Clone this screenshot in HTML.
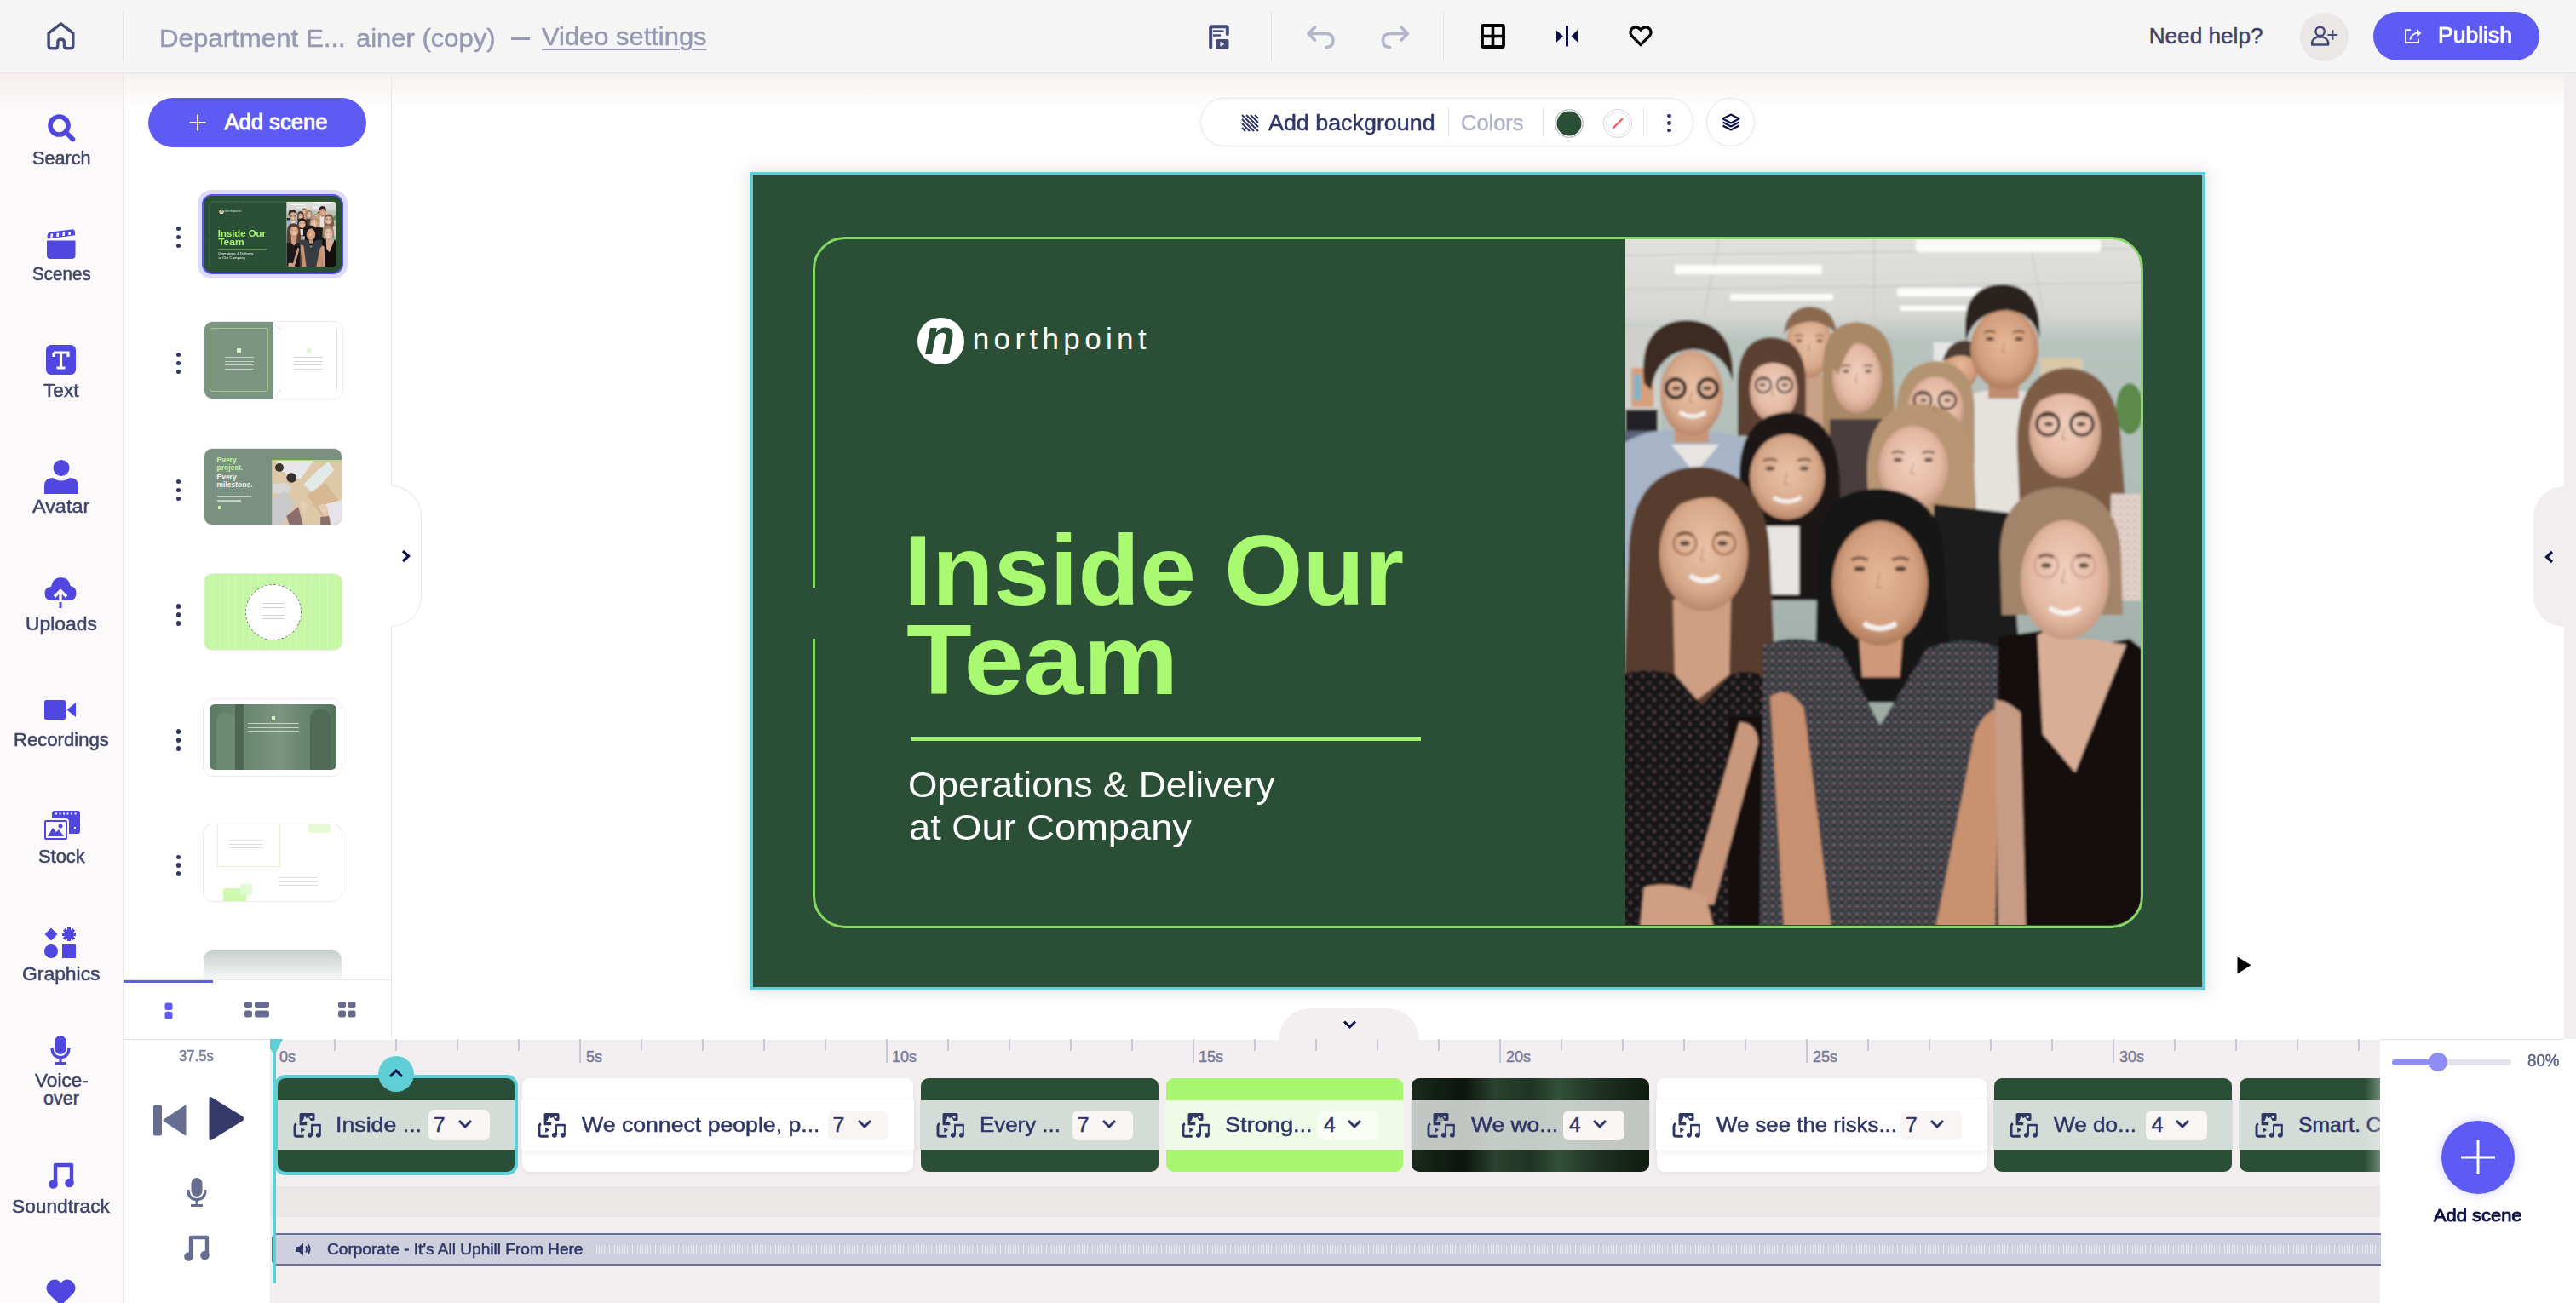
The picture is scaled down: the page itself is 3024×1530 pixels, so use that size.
<!DOCTYPE html><html><head><meta charset="utf-8"><style>
*{margin:0;padding:0;box-sizing:border-box}
html,body{width:3024px;height:1530px;overflow:hidden;background:#fff;font-family:"Liberation Sans",sans-serif}
.a{position:absolute}
.t{position:absolute;line-height:1;white-space:nowrap}
.m{-webkit-text-stroke:0.5px currentColor}
.sb{-webkit-text-stroke:0.9px currentColor}
svg{position:absolute;overflow:visible}
</style></head><body>
<div class="a" style="left:0;top:0;width:3024px;height:86px;background:#f5f5f5;border-bottom:1px solid #e6e2e2"></div>
<div class="a" style="left:0;top:86px;width:145px;height:1444px;background:#fcf9fa;border-right:1px solid #ebe7e8"></div>
<div class="a" style="left:145px;top:86px;width:315px;height:1134px;background:#fff;border-right:1px solid #ebe7e8"></div>
<div class="a" style="left:3010px;top:86px;width:14px;height:1134px;background:#f2eeef"></div>
<div class="a" style="left:0;top:86px;width:3010px;height:42px;background:linear-gradient(rgba(238,230,226,.55),rgba(255,255,255,0))"></div>
<div class="a" style="left:144px;top:14px;width:1px;height:58px;background:#e3e0e0"></div>
<div class="a" style="left:1492px;top:14px;width:1px;height:58px;background:#e3e0e0"></div>
<div class="a" style="left:1694px;top:14px;width:1px;height:58px;background:#e3e0e0"></div>
<svg style="left:55px;top:26px" width="34" height="34" viewBox="0 0 34 34"><path d="M2.1 12.8 L16.5 1.9 L30.8 12.8 V27.5 Q30.8 30.8 27.5 30.8 H23.7 Q20.4 30.8 20.4 27.5 V23.8 Q20.4 20 16.6 20 Q12.8 20 12.8 23.8 V27.5 Q12.8 30.8 9.5 30.8 H5.4 Q2.1 30.8 2.1 27.5 Z" fill="none" stroke="#464c78" stroke-width="3.4" stroke-linejoin="round"/></svg>
<div class="t m" style="left:187.3px;top:30.2px;font-size:29.65px;color:#9799b3;font-weight:400;letter-spacing:0.00px;transform:scaleX(1.0539);transform-origin:0 0;">Department E...</div>
<div class="t m" style="left:418.2px;top:30.2px;font-size:29.65px;color:#9799b3;font-weight:400;letter-spacing:0.00px;transform:scaleX(1.0451);transform-origin:0 0;">ainer (copy)</div>
<div class="a" style="left:600px;top:44px;width:22px;height:3px;background:#9799b3"></div>
<div class="t m" style="left:636.2px;top:28.0px;font-size:29.65px;color:#9799b3;font-weight:400;letter-spacing:0.00px;transform:scaleX(1.0425);transform-origin:0 0;text-decoration:underline;text-underline-offset:4px;text-decoration-thickness:2px">Video settings</div>
<svg style="left:1419px;top:29px" width="24" height="29" viewBox="0 0 24 29"><path d="M2.2 26.5 V4 Q2.2 2.2 4 2.2 H20 Q21.8 2.2 21.8 4 V11" fill="none" stroke="#464c78" stroke-width="4" stroke-linecap="round"/><rect x="5" y="6.3" width="12.5" height="2.4" fill="#464c78"/><rect x="5" y="11.3" width="9" height="2.4" fill="#464c78"/><rect x="8" y="17" width="15.5" height="11.5" rx="2" fill="#464c78"/><path d="M13.5 19.8 L18.5 22.8 L13.5 25.8Z" fill="#f4f4f4"/></svg>
<svg style="left:1534px;top:30px" width="34" height="28" viewBox="0 0 34 28"><path d="M9.5 2 L2 9.5 L9.5 17 M2 9.5 H22.5 Q31 9.5 31 17.5 Q31 25 23 25.5" fill="none" stroke="#b3b5cc" stroke-width="3.6" stroke-linecap="round" stroke-linejoin="round"/></svg>
<svg style="left:1620px;top:30px" width="35" height="28" viewBox="0 0 35 28"><path d="M25 2 L32.5 9.5 L25 17 M32.5 9.5 H12 Q3.5 9.5 3.5 17.5 Q3.5 25 11.5 25.5" fill="none" stroke="#b3b5cc" stroke-width="3.6" stroke-linecap="round" stroke-linejoin="round"/></svg>
<svg style="left:1738px;top:28px" width="29" height="29" viewBox="0 0 29 29"><rect x="2" y="2" width="25" height="25" rx="1.5" fill="none" stroke="#000" stroke-width="3.8"/><path d="M14.5 2 V27 M2 14.5 H27" stroke="#000" stroke-width="3.6"/></svg>
<svg style="left:1827px;top:30px" width="25" height="26" viewBox="0 0 25 26"><rect x="11" y="0.5" width="3" height="24" fill="#0b0f4a"/><path d="M0 5.5 L8 12.6 L0 19.8Z M25 5 L17.5 12.6 L25 19.5Z" fill="#0b0f4a"/></svg>
<svg style="left:1912px;top:30px" width="28" height="25" viewBox="0 0 28 25"><path d="M14 22.5 L3.8 12.3 Q0.8 9 2.5 5.3 Q4.5 1.8 8 1.8 Q11.3 1.8 14 5 Q16.7 1.8 20 1.8 Q23.5 1.8 25.5 5.3 Q27.2 9 24.2 12.3 Z" fill="none" stroke="#000" stroke-width="3.2" stroke-linejoin="miter"/></svg>
<div class="t m" style="left:2522.7px;top:29.1px;font-size:26.16px;color:#3f4468;font-weight:400;letter-spacing:0.00px;">Need help?</div>
<div class="a" style="left:2700px;top:14.5px;width:57px;height:57px;border-radius:50%;background:#ebe7e7"></div>
<svg style="left:2700px;top:20px" width="50" height="45" viewBox="2700 20 50 45"><circle cx="2723.6" cy="36.9" r="5.2" fill="none" stroke="#464c78" stroke-width="2.5"/><path d="M2714.2 52.6 V49.5 Q2714.5 46 2719.5 43.8 L2721 43.2 Q2723.6 44.5 2726.2 43.2 L2727.7 43.8 Q2732.7 46 2733 49.5 V52.6 Z" fill="none" stroke="#464c78" stroke-width="2.5" stroke-linejoin="round"/><path d="M2732.4 41 H2744.2 M2738.3 35.2 V46.8" stroke="#464c78" stroke-width="2.2"/></svg>
<div class="a" style="left:2786px;top:14px;width:195px;height:57px;border-radius:29px;background:#5d5bf3"></div>
<svg style="left:2815px;top:25px" width="35" height="35" viewBox="2815 25 35 35"><path d="M2830 35.1 H2823.9 V49.8 H2839 V45.5" fill="none" stroke="#fff" stroke-width="1.8"/><path d="M2829.5 46 Q2831 39.5 2838.5 38.3" fill="none" stroke="#fff" stroke-width="1.8" stroke-linecap="round"/><path d="M2836.8 34.3 L2842.6 38.6 L2837.6 43.3Z" fill="#fff"/></svg>
<div class="t sb" style="left:2862.4px;top:29.3px;font-size:25.87px;color:#fff;font-weight:400;letter-spacing:0.00px;transform:scaleX(1.0254);transform-origin:0 0;">Publish</div>
<svg style="left:55px;top:133px" width="34" height="34" viewBox="0 0 34 34"><circle cx="14.5" cy="14.5" r="10.5" fill="none" stroke="#4f47e0" stroke-width="5.6"/><path d="M22.5 22.5 L30.5 30.5" stroke="#4f47e0" stroke-width="5.6" stroke-linecap="round"/></svg>
<div class="t m" style="left:38.0px;top:175.7px;font-size:21.51px;color:#3f4468;font-weight:400;letter-spacing:0.00px;transform:scaleX(1.0050);transform-origin:0 0;">Search</div>
<svg style="left:54px;top:269px" width="35" height="35" viewBox="0 0 35 35"><path d="M1.5 8.5 Q1.5 4.2 5.5 3.6 L30 0.4 Q33.5 0 34 3.5 L34.2 7.2 L1.8 11.5 Z" fill="#4f47e0"/><path d="M5.6 5.6 h2.6 l-0.4 4.2 h-2.6z M12.6 4.7 h2.6 l-0.4 4.2 h-2.6z M19.6 3.8 h2.6 l-0.4 4.2 h-2.6z M26.6 2.9 h2.6 l-0.4 4.2 h-2.6z" fill="#fcf9fa"/><path d="M1 13.5 H34.5 V30.5 Q34.5 35 30 35 H5.5 Q1 35 1 30.5 Z" fill="#4f47e0"/></svg>
<div class="t m" style="left:38.0px;top:312.2px;font-size:21.51px;color:#3f4468;font-weight:400;letter-spacing:0.00px;transform:scaleX(0.9583);transform-origin:0 0;">Scenes</div>
<svg style="left:54px;top:405px" width="35" height="35" viewBox="0 0 35 35"><rect x="0" y="0" width="35" height="35" rx="6" fill="#4f47e0"/><path d="M9 9 H26 V14 M9 9 V14 M17.5 9 V27 M12.5 27 H22.5" fill="none" stroke="#fff" stroke-width="3.2"/></svg>
<div class="t m" style="left:51.0px;top:449.2px;font-size:21.51px;color:#3f4468;font-weight:400;letter-spacing:0.00px;transform:scaleX(1.0518);transform-origin:0 0;">Text</div>
<svg style="left:52px;top:540px" width="40" height="40" viewBox="0 0 40 40"><circle cx="20" cy="9.5" r="9.5" fill="#4f47e0"/><path d="M0 40 V31 Q0 21 10 21 Q15 24.5 20 24.5 Q25 24.5 30 21 Q40 21 40 31 V40 Z" fill="#4f47e0"/></svg>
<div class="t m" style="left:38.0px;top:585.2px;font-size:21.51px;color:#3f4468;font-weight:400;letter-spacing:0.00px;transform:scaleX(1.0878);transform-origin:0 0;">Avatar</div>
<svg style="left:52px;top:677px" width="38" height="37" viewBox="0 0 38 37"><path d="M9 28 Q0.5 28 0.5 20 Q0.5 12.5 8 12 Q10 1 19.5 1 Q29 1 30.5 11 Q37.5 12 37.5 19.5 Q37.5 28 29 28 Z" fill="#4f47e0"/><path d="M19 35 V17 M12 23.5 L19 16.5 L26 23.5" fill="none" stroke="#fcf9fa" stroke-width="3.4" stroke-linejoin="round"/><path d="M19 37 V30" stroke="#4f47e0" stroke-width="3"/></svg>
<div class="t m" style="left:29.9px;top:723.2px;font-size:21.51px;color:#3f4468;font-weight:400;letter-spacing:0.00px;transform:scaleX(1.0631);transform-origin:0 0;">Uploads</div>
<svg style="left:52px;top:822px" width="38" height="24" viewBox="0 0 38 24"><rect x="0" y="0" width="25" height="23" rx="2.5" fill="#4f47e0"/><path d="M26.5 11.5 L37 3 V20 Z" fill="#4f47e0"/></svg>
<div class="t m" style="left:16.0px;top:859.2px;font-size:21.51px;color:#3f4468;font-weight:400;letter-spacing:0.00px;transform:scaleX(1.0280);transform-origin:0 0;">Recordings</div>
<svg style="left:49px;top:951px" width="46" height="37" viewBox="0 0 46 37"><rect x="12" y="1" width="33" height="27" rx="3" fill="#4f47e0"/><path d="M16 4.5 H42 M38 21 H42" stroke="#fcf9fa" stroke-width="2" stroke-dasharray="2 2.5"/><rect x="2" y="11" width="29" height="25" rx="3" fill="#4f47e0" stroke="#fcf9fa" stroke-width="2"/><rect x="5" y="14" width="23" height="19" fill="#fcf9fa"/><path d="M7 31 L13 21 L17 26 L20 23 L26 31Z" fill="#4f47e0"/><circle cx="22" cy="19" r="2.5" fill="#4f47e0"/></svg>
<div class="t m" style="left:44.6px;top:996.2px;font-size:21.51px;color:#3f4468;font-weight:400;letter-spacing:0.00px;transform:scaleX(1.0163);transform-origin:0 0;">Stock</div>
<svg style="left:52px;top:1089px" width="38" height="36" viewBox="0 0 38 36"><path d="M8 0.5 L15.5 8 L8 15.5 L0.5 8Z" fill="#4f47e0"/><path d="M29 0 V16 M21 8 H37 M23.3 2.3 L34.7 13.7 M34.7 2.3 L23.3 13.7" stroke="#4f47e0" stroke-width="4"/><circle cx="8" cy="28" r="8" fill="#4f47e0"/><rect x="21" y="20" width="16" height="16" fill="#4f47e0"/></svg>
<div class="t m" style="left:25.9px;top:1133.7px;font-size:21.51px;color:#3f4468;font-weight:400;letter-spacing:0.00px;transform:scaleX(1.0643);transform-origin:0 0;">Graphics</div>
<svg style="left:59px;top:1216px" width="24" height="34" viewBox="0 0 24 34"><rect x="5.5" y="0" width="13" height="22" rx="6.5" fill="#4f47e0"/><path d="M2 14 Q2 25.5 12 25.5 Q22 25.5 22 14" fill="none" stroke="#4f47e0" stroke-width="3.2"/><path d="M12 25.5 V32 M5 32.5 H19" stroke="#4f47e0" stroke-width="3.2"/></svg>
<div class="t m" style="left:40.8px;top:1259.2px;font-size:21.51px;color:#3f4468;font-weight:400;letter-spacing:0.00px;transform:scaleX(1.0521);transform-origin:0 0;">Voice-</div>
<div class="t m" style="left:51.0px;top:1280.2px;font-size:21.51px;color:#3f4468;font-weight:400;letter-spacing:0.00px;">over</div>
<svg style="left:57px;top:1365px" width="30" height="31" viewBox="0 0 30 31"><path d="M8 25 V3 H27 V23" fill="none" stroke="#4f47e0" stroke-width="4.4" stroke-linejoin="round"/><circle cx="5.5" cy="25.5" r="5.3" fill="#4f47e0"/><circle cx="24.5" cy="24" r="5.3" fill="#4f47e0"/></svg>
<div class="t m" style="left:14.0px;top:1407.2px;font-size:21.51px;color:#3f4468;font-weight:400;letter-spacing:0.00px;transform:scaleX(1.0568);transform-origin:0 0;">Soundtrack</div>
<svg style="left:54px;top:1502px" width="35" height="32" viewBox="0 0 35 32"><path d="M17.5 31 L3 17 Q-1 12 1.5 6.5 Q4.5 0.5 10 0.5 Q14.5 0.5 17.5 4.5 Q20.5 0.5 25 0.5 Q30.5 0.5 33.5 6.5 Q36 12 32 17Z" fill="#4f47e0"/></svg>
<div class="a" style="left:174px;top:115px;width:256px;height:58px;border-radius:29px;background:#5d5bf3"></div>
<svg style="left:222px;top:134px" width="20" height="20" viewBox="0 0 20 20"><path d="M10 0.5 V19.5 M0.5 10 H19.5" stroke="#fff" stroke-width="2"/></svg>
<div class="t sb" style="left:263.5px;top:131.4px;font-size:25.58px;color:#fff;font-weight:400;letter-spacing:0.00px;">Add scene</div>
<div class="a" style="left:206.6px;top:265.9px;width:5.6px;height:5.6px;border-radius:50%;background:#2f3566"></div>
<div class="a" style="left:206.6px;top:275.7px;width:5.6px;height:5.6px;border-radius:50%;background:#2f3566"></div>
<div class="a" style="left:206.6px;top:285.5px;width:5.6px;height:5.6px;border-radius:50%;background:#2f3566"></div>
<div class="a" style="left:206.6px;top:413.9px;width:5.6px;height:5.6px;border-radius:50%;background:#2f3566"></div>
<div class="a" style="left:206.6px;top:423.7px;width:5.6px;height:5.6px;border-radius:50%;background:#2f3566"></div>
<div class="a" style="left:206.6px;top:433.5px;width:5.6px;height:5.6px;border-radius:50%;background:#2f3566"></div>
<div class="a" style="left:206.6px;top:562.9px;width:5.6px;height:5.6px;border-radius:50%;background:#2f3566"></div>
<div class="a" style="left:206.6px;top:572.7px;width:5.6px;height:5.6px;border-radius:50%;background:#2f3566"></div>
<div class="a" style="left:206.6px;top:582.5px;width:5.6px;height:5.6px;border-radius:50%;background:#2f3566"></div>
<div class="a" style="left:206.6px;top:709.4px;width:5.6px;height:5.6px;border-radius:50%;background:#2f3566"></div>
<div class="a" style="left:206.6px;top:719.2px;width:5.6px;height:5.6px;border-radius:50%;background:#2f3566"></div>
<div class="a" style="left:206.6px;top:729.0px;width:5.6px;height:5.6px;border-radius:50%;background:#2f3566"></div>
<div class="a" style="left:206.6px;top:856.4px;width:5.6px;height:5.6px;border-radius:50%;background:#2f3566"></div>
<div class="a" style="left:206.6px;top:866.2px;width:5.6px;height:5.6px;border-radius:50%;background:#2f3566"></div>
<div class="a" style="left:206.6px;top:876.0px;width:5.6px;height:5.6px;border-radius:50%;background:#2f3566"></div>
<div class="a" style="left:206.6px;top:1003.6px;width:5.6px;height:5.6px;border-radius:50%;background:#2f3566"></div>
<div class="a" style="left:206.6px;top:1013.4px;width:5.6px;height:5.6px;border-radius:50%;background:#2f3566"></div>
<div class="a" style="left:206.6px;top:1023.2px;width:5.6px;height:5.6px;border-radius:50%;background:#2f3566"></div>
<div class="a" style="left:232px;top:223px;width:176px;height:104px;border-radius:16px;background:#dddafd"></div>
<div class="a" style="left:237px;top:228px;width:166px;height:93.5px;border-radius:12px;background:#5a55ee"></div>
<div class="a" style="left:238.5px;top:377px;width:164px;height:92px;border-radius:10px;background:#fff;border:1px solid #eee9ea;overflow:hidden"><div class="a" style="left:0;top:0;width:81px;height:92px;background:#7c9482"></div><div class="a" style="left:6px;top:7px;width:69px;height:75px;border:1px solid #a9d394;border-radius:3px;opacity:.8"></div><div class="a" style="left:87px;top:7px;width:69px;height:75px;border-left:1px solid #9aa39c;border-right:1px solid #d9e3dc;border-radius:3px"></div><div class="a" style="left:38px;top:31px;width:5px;height:5px;background:#d5f6c0"></div><div class="a" style="left:120px;top:31px;width:5px;height:5px;background:#dff8cf"></div><div class="a" style="left:24px;top:41px;width:34px;height:18px;background:repeating-linear-gradient(#dfe6e0 0 1.2px,transparent 1.2px 4.5px);opacity:.75"></div><div class="a" style="left:105px;top:41px;width:34px;height:18px;background:repeating-linear-gradient(#c4c4c9 0 1.2px,transparent 1.2px 4.5px);opacity:.7"></div></div>
<div class="a" style="left:238.5px;top:526px;width:163px;height:91px;border-radius:10px;background:#7a9181;border:1px solid #eee9ea;overflow:hidden"><svg style="left:80.5px;top:12.5px" width="82" height="78" viewBox="319.8 539 82 78"><rect x="319" y="539" width="84" height="80" fill="#ddc9a8"/><rect x="319.8" y="539" width="82" height="1.2" fill="#9fe07f"/><path d="M324 540 L368 540 L352 562 L330 552Z" fill="#e8e6ea"/><path d="M373 551 L385 541 L392 551 L367 578 L356 568Z" fill="#e3e9e7"/><path d="M360 580 L382 566 L400 590 L378 606Z" fill="#d6b892"/><circle cx="327.8" cy="548" r="5" fill="#3b3330"/><circle cx="342" cy="560" r="5.8" fill="#35302d"/><path d="M319.8 567 L335 566 L342 572 L336 580 L319.8 578Z" fill="#d9d6d6"/><path d="M319.8 585 L334 575 L346 590 L330 617 L319.8 617Z" fill="#c9c9cb"/><path d="M336 605 L350 594 L356 617 L340 617Z" fill="#8c6f6d"/><path d="M376 606 L386 605 L388 617 L376 617Z" fill="#8c6f6d"/><path d="M382 591 L401 586 L401 617 L390 617Z" fill="#e6e4ea"/><path d="M352 590 Q356 585 362 592 L356 602 Z M373 593 Q380 588 385 596 L381 606Z" fill="#e8cdb5"/></svg><div class="t" style="left:15px;top:9px;font-size:8.5px;font-weight:700;color:#bdf59a;line-height:9px">Every<br>project.</div><div class="t" style="left:15px;top:29px;font-size:8.5px;font-weight:700;color:#f1f4f1;line-height:9px">Every<br>milestone.</div><div class="a" style="left:15px;top:55px;width:40px;height:1.5px;background:#c2cec6"></div><div class="a" style="left:15px;top:60px;width:28px;height:1.5px;background:#c2cec6"></div><div class="a" style="left:16px;top:67px;width:4px;height:4px;background:#c9f3ad"></div></div>
<div class="a" style="left:238.5px;top:672.5px;width:163px;height:91px;border-radius:10px;background:#c6f7a6 repeating-linear-gradient(90deg,rgba(255,255,255,.18) 0 1px,transparent 1px 9px);border:1px solid #eee9ea;overflow:hidden"><div class="a" style="left:48px;top:12px;width:66px;height:66px;border-radius:50%;background:#fff;border:1px dashed #6f7c70"></div><div class="a" style="left:68px;top:34px;width:26px;height:22px;background:repeating-linear-gradient(#cfd0d3 0 1px,transparent 1px 4.5px)"></div></div>
<div class="a" style="left:238px;top:819.5px;width:164px;height:92.5px;border-radius:12px;background:#fff;border:1px solid #eee9ea"></div>
<div class="a" style="left:246px;top:827px;width:148.5px;height:77px;border-radius:6px;background:linear-gradient(90deg,#5d7a63 0%,#6a8770 30%,#7a9480 55%,#688570 75%,#53705a 100%);overflow:hidden"><div class="a" style="left:30px;top:0;width:10px;height:77px;background:#4e6653"></div><div class="a" style="left:8px;top:10px;width:22px;height:67px;border-radius:10px 10px 0 0;background:#6c8a72"></div><div class="a" style="left:118px;top:6px;width:24px;height:71px;border-radius:11px 11px 0 0;background:#4f6b56"></div><div class="a" style="left:73px;top:14px;width:4px;height:4px;background:#d5f5bd"></div><div class="a" style="left:45px;top:22px;width:60px;height:14px;background:repeating-linear-gradient(rgba(230,236,231,.75) 0 1px,transparent 1px 4.5px)"></div></div>
<div class="a" style="left:238px;top:966.7px;width:164px;height:92.5px;border-radius:12px;background:#fff;border:1px solid #eee9ea;overflow:hidden"><div class="a" style="left:16px;top:0;width:74px;height:50px;border:1px solid #e2f3d8;border-top:0"></div><div class="a" style="left:123px;top:0;width:26px;height:10px;background:#e5fad5;border-radius:0 0 3px 3px"></div><div class="a" style="left:30px;top:18px;width:40px;height:12px;background:repeating-linear-gradient(#dcdce0 0 1px,transparent 1px 4.5px)"></div><div class="a" style="left:88px;top:62px;width:46px;height:12px;background:repeating-linear-gradient(#dcdce0 0 1px,transparent 1px 4.5px)"></div><div class="a" style="left:23px;top:75px;width:27px;height:18px;background:#cff8b0;border-radius:3px"></div><div class="a" style="left:43px;top:70px;width:14px;height:13px;background:#e3fbd3;border-radius:2px"></div></div>
<div class="a" style="left:239px;top:1115.6px;width:162px;height:35px;border-radius:10px 10px 0 0;background:linear-gradient(#c8cfcb,#f3f5f4 90%,#fff)"></div>
<div class="a" style="left:145px;top:1150px;width:314px;height:1px;background:#ebe7e8"></div>
<div class="a" style="left:145px;top:1151px;width:105px;height:3px;background:#5d5bf3"></div>
<svg style="left:193px;top:1177px" width="10" height="20" viewBox="0 0 10 20"><rect x="0.5" y="0.5" width="9" height="8.5" rx="2.5" fill="#5d5bf3"/><rect x="0.5" y="10.8" width="9" height="8.7" rx="2.5" fill="#5d5bf3"/></svg>
<svg style="left:287px;top:1176px" width="29" height="19" viewBox="0 0 29 19"><rect x="0" y="0" width="9" height="8" rx="2.5" fill="#676c91"/><rect x="12" y="0" width="17" height="8" rx="2.5" fill="#676c91"/><rect x="0" y="10.5" width="9" height="8" rx="2.5" fill="#676c91"/><rect x="12" y="10.5" width="17" height="8" rx="2.5" fill="#676c91"/></svg>
<svg style="left:397px;top:1176px" width="21" height="19" viewBox="0 0 21 19"><rect x="0" y="0" width="9" height="8" rx="2.5" fill="#676c91"/><rect x="11.5" y="0" width="9" height="8" rx="2.5" fill="#676c91"/><rect x="0" y="10.5" width="9" height="8" rx="2.5" fill="#676c91"/><rect x="11.5" y="10.5" width="9" height="8" rx="2.5" fill="#676c91"/></svg>
<div class="a" style="left:459px;top:570px;width:36px;height:166px;background:#fff;border:1px solid #ebe7e8;border-left:0;border-radius:0 36px 36px 0"></div>
<div class="a" style="left:458px;top:571px;width:2px;height:164px;background:#fff"></div>
<svg style="left:471px;top:645px" width="11" height="16" viewBox="0 0 11 16"><path d="M2 2 L8.5 8 L2 14" fill="none" stroke="#0b0f4a" stroke-width="3.2"/></svg>
<div class="a" style="left:1409px;top:115px;width:579px;height:57px;border-radius:29px;background:#fff;border:1px solid #e9e6e6;box-shadow:0 1px 6px rgba(120,100,90,.06)"></div>
<svg style="left:1457px;top:134px" width="21" height="21" viewBox="0 0 21 21"><path d="M1 1 L20 20 M1 6 L15 20 M1 11 L10 20 M1 16 L5 20 M6 1 L20 15 M11 1 L20 10 M16 1 L20 5" stroke="#2f3566" stroke-width="2"/></svg>
<div class="t m" style="left:1489.0px;top:131.1px;font-size:26.16px;color:#2f3566;font-weight:400;letter-spacing:0.00px;transform:scaleX(1.0267);transform-origin:0 0;">Add background</div>
<div class="a" style="left:1700px;top:126px;width:1px;height:35px;background:#e6e3e3"></div>
<div class="t m" style="left:1714.5px;top:131.1px;font-size:26.16px;color:#b1b3c9;font-weight:400;letter-spacing:0.00px;transform:scaleX(0.9731);transform-origin:0 0;">Colors</div>
<div class="a" style="left:1811px;top:126px;width:1px;height:35px;background:#e6e3e3"></div>
<div class="a" style="left:1824.5px;top:127.5px;width:34px;height:34px;border-radius:50%;background:#2a4f36;border:1px solid #c9c9d6;box-shadow:inset 0 0 0 1.5px #fff"></div>
<div class="a" style="left:1882px;top:127.5px;width:34px;height:34px;border-radius:50%;background:#fff;border:1px solid #d6d6e0;box-shadow:inset 0 0 0 2px #fff,inset 0 0 0 3px #e4e4ec"></div>
<svg style="left:1891px;top:137px" width="16" height="16" viewBox="0 0 16 16"><path d="M2 14 L14 2" stroke="#f0524f" stroke-width="2"/></svg>
<div class="a" style="left:1929px;top:126px;width:1px;height:35px;background:#e6e3e3"></div>
<div class="a" style="left:1957px;top:133.5px;width:4.8px;height:4.8px;border-radius:50%;background:#2f3566"></div>
<div class="a" style="left:1957px;top:142.1px;width:4.8px;height:4.8px;border-radius:50%;background:#2f3566"></div>
<div class="a" style="left:1957px;top:150.7px;width:4.8px;height:4.8px;border-radius:50%;background:#2f3566"></div>
<div class="a" style="left:2003px;top:115px;width:57px;height:57px;border-radius:50%;background:#fff;border:1px solid #e9e6e6;box-shadow:0 1px 6px rgba(120,100,90,.06)"></div>
<svg style="left:2021px;top:133px" width="22" height="22" viewBox="0 0 22 22"><path d="M11 1.5 L20.5 6.5 L11 11.5 L1.5 6.5Z" fill="none" stroke="#0b0f4a" stroke-width="2" stroke-linejoin="round"/><path d="M1.5 10.5 L11 15.5 L20.5 10.5 M1.5 14.5 L11 19.5 L20.5 14.5" fill="none" stroke="#0b0f4a" stroke-width="2" stroke-linejoin="round"/></svg>
<div class="a" style="left:880px;top:202px;width:1709px;height:961px;background:#5fcfd5;box-shadow:0 0 18px 3px rgba(130,100,85,.17)"></div>
<div class="a" style="left:884px;top:206px;width:1701px;height:953px;background:#2a4f36"></div>
<div class="a" style="left:954px;top:277.5px;width:1562px;height:812.0px;border:3.5px solid #86d763;border-radius:38px"></div>
<div class="a" style="left:950px;top:690px;width:12px;height:60px;background:#2a4f36"></div>
<div class="a" id="photo" style="left:1908px;top:281px;width:604.5px;height:805px;border-radius:0 34px 34px 0;overflow:hidden;background:#b9b6b4"><svg style="left:0;top:0" width="604.5" height="805" viewBox="1908 281 604.5 805" preserveAspectRatio="none"><defs><filter id="bl" x="-5%" y="-5%" width="110%" height="110%"><feGaussianBlur stdDeviation="1.8"/></filter><pattern id="fl" width="9" height="9" patternUnits="userSpaceOnUse"><rect width="9" height="9" fill="#2c373d"/><circle cx="2" cy="2" r="1.3" fill="#b8858a"/><circle cx="6.5" cy="6" r="1.1" fill="#9c7b80"/><circle cx="7" cy="1.5" r="0.6" fill="#cbb9b7"/></pattern><pattern id="fl2" width="14" height="14" patternUnits="userSpaceOnUse"><rect width="14" height="14" fill="#161414"/><ellipse cx="4" cy="4" rx="2.6" ry="1.4" fill="#4e4148"/><circle cx="10" cy="10" r="1.4" fill="#7d5c63"/></pattern><pattern id="fl3" width="8" height="8" patternUnits="userSpaceOnUse"><rect width="8" height="8" fill="#e2d3cb"/><circle cx="2" cy="3" r="1.2" fill="#c98d8f"/><circle cx="6" cy="6" r="1" fill="#b7a39a"/></pattern><radialGradient id="sk" cx="50%" cy="45%" r="55%"><stop offset="0" stop-color="#e9c1a6"/><stop offset=".7" stop-color="#d8a98b"/><stop offset="1" stop-color="#b98669"/></radialGradient><radialGradient id="sk2" cx="50%" cy="45%" r="55%"><stop offset="0" stop-color="#e6b796"/><stop offset=".7" stop-color="#d39f7e"/><stop offset="1" stop-color="#ad7a5b"/></radialGradient><radialGradient id="sk3" cx="50%" cy="45%" r="55%"><stop offset="0" stop-color="#f0d0bf"/><stop offset=".7" stop-color="#e3b9a3"/><stop offset="1" stop-color="#c69882"/></radialGradient><linearGradient id="wall" x1="0" y1="0" x2="0" y2="1"><stop offset="0" stop-color="#e3e2df"/><stop offset=".12" stop-color="#d6d6d3"/><stop offset=".16" stop-color="#b8c3be"/><stop offset=".4" stop-color="#aebbb6"/><stop offset="1" stop-color="#8f9a95"/></linearGradient></defs><g filter="url(#bl)"><rect x="1900" y="270" width="620" height="820" fill="url(#wall)"/><path d="M1900 300 L2520 292 M1900 340 L2520 332 M2020 270 L2000 372 M2200 270 L2200 372 M2380 270 L2400 372" stroke="#c9c8c5" stroke-width="1.5"/><rect x="1966" y="311" width="173" height="11" rx="3" fill="#fbfbfa"/><rect x="2031" y="345" width="121" height="8" rx="3" fill="#fbfbfa"/><rect x="2249" y="281" width="217" height="15" rx="3" fill="#fbfbfa"/><rect x="2227" y="338" width="102" height="10" rx="3" fill="#fbfbfa"/><rect x="2230" y="359" width="79" height="6" rx="3" fill="#fbfbfa"/><rect x="1905" y="384" width="44" height="140" fill="#cfcfcb"/><rect x="1915" y="432" width="26" height="46" fill="#d69f7c"/><rect x="1918" y="440" width="8" height="30" fill="#7fb5c8"/><rect x="1908" y="481" width="38" height="26" fill="#222326"/><rect x="1905" y="506" width="42" height="14" fill="#5b6476"/><rect x="2270" y="402" width="40" height="30" fill="#e4e6e6"/><rect x="2395" y="420" width="50" height="25" fill="#d9c8a8"/><ellipse cx="2500" cy="480" rx="16" ry="30" fill="#5d8a4c"/><ellipse cx="2302" cy="432" rx="20" ry="26" fill="url(#sk2)"/><path d="M2280 424 Q2288 398 2310 400 Q2330 408 2326 430 Q2310 412 2290 420Z" fill="#4b3a30"/><rect x="2104" y="440" width="44" height="70" fill="#c9a088"/><ellipse cx="2124" cy="406" rx="27" ry="38" fill="url(#sk)"/><path d="M2094 392 Q2098 360 2126 360 Q2154 362 2156 392 Q2140 376 2122 378 Q2104 380 2094 392Z" fill="#8a6a50"/><path d="M2140 425 Q2142 380 2180 378 Q2222 382 2222 432 L2226 525 L2140 525Z" fill="#a98865"/><ellipse cx="2180" cy="444" rx="29" ry="41" fill="url(#sk3)"/><path d="M2150 430 Q2160 392 2190 396 Q2170 400 2158 440Z" fill="#a98865"/><rect x="2148" y="492" width="70" height="95" fill="#4a3e3c"/><path d="M2294 470 Q2330 455 2352 458 Q2378 456 2406 470 L2410 625 L2290 625Z" fill="#e5e1dd"/><rect x="2334" y="440" width="36" height="28" fill="#c08d70"/><ellipse cx="2353" cy="410" rx="40" ry="47" fill="url(#sk2)"/><path d="M2308 400 Q2300 334 2352 334 Q2398 336 2394 398 Q2388 368 2356 364 Q2318 366 2308 400Z" fill="#2b211c"/><path d="M2226 482 Q2228 426 2274 424 Q2318 428 2318 482 L2318 545 L2226 545Z" fill="#b39371"/><ellipse cx="2272" cy="480" rx="33" ry="38" fill="url(#sk3)"/><circle cx="2257" cy="470" r="10" fill="none" stroke="#3d302b" stroke-width="2.6"/><circle cx="2286" cy="470" r="10" fill="none" stroke="#3d302b" stroke-width="2.6"/><path d="M2040 452 Q2040 396 2080 396 Q2120 398 2120 452 L2120 512 L2040 512Z" fill="#5b4132"/><ellipse cx="2082" cy="458" rx="28" ry="38" fill="url(#sk3)"/><path d="M2054 440 Q2080 412 2112 440 L2112 425 Q2080 398 2052 425Z" fill="#5b4132"/><circle cx="2070" cy="452" r="9" fill="none" stroke="#3a3838" stroke-width="2.2"/><circle cx="2095" cy="452" r="9" fill="none" stroke="#3a3838" stroke-width="2.2"/><path d="M2368 525 Q2366 434 2428 432 Q2488 436 2490 525 L2498 625 L2372 625Z" fill="#7b5c45"/><ellipse cx="2424" cy="508" rx="42" ry="53" fill="url(#sk3)"/><path d="M2384 478 Q2424 446 2468 480 L2470 458 Q2430 432 2380 460Z" fill="#7b5c45"/><circle cx="2404" cy="498" r="13" fill="none" stroke="#3b2d28" stroke-width="3.4"/><circle cx="2444" cy="498" r="13" fill="none" stroke="#3b2d28" stroke-width="3.4"/><rect x="2478" y="580" width="40" height="125" fill="url(#fl3)"/><path d="M1900 525 Q1930 500 1990 505 Q2040 508 2064 525 L2070 665 L1900 665Z" fill="#a7b4c6"/><path d="M1962 522 L1990 556 L2018 522Z" fill="#e7e5e2"/><rect x="1966" y="495" width="40" height="25" fill="#c89578"/><ellipse cx="1986" cy="462" rx="37" ry="50" fill="url(#sk)"/><path d="M1930 450 Q1922 378 1980 376 Q2038 378 2034 448 Q2024 412 1988 410 Q1946 412 1938 458Z" fill="#3e2b20"/><circle cx="1967" cy="456" r="11" fill="none" stroke="#1d1b1b" stroke-width="4"/><circle cx="2005" cy="456" r="11" fill="none" stroke="#1d1b1b" stroke-width="4"/><path d="M1972 484 Q1987 494 2002 484" fill="none" stroke="#f4f2f0" stroke-width="5"/><path d="M2192 562 Q2188 476 2256 474 Q2318 478 2318 562 L2324 672 L2196 672Z" fill="#b89573"/><ellipse cx="2246" cy="549" rx="41" ry="49" fill="url(#sk3)"/><path d="M2270 592 L2358 602 L2372 785 L2270 785Z" fill="#1c1a1a"/><path d="M2042 565 Q2040 486 2100 484 Q2160 488 2160 572 L2166 705 L2046 705Z" fill="#1c1816"/><ellipse cx="2098" cy="560" rx="44" ry="50" fill="url(#sk)"/><path d="M2056 545 Q2070 500 2110 500 Q2150 505 2150 545 L2150 515 Q2120 486 2090 488 Q2058 495 2056 545Z" fill="#1c1816"/><path d="M2082 584 Q2098 594 2114 584" fill="none" stroke="#f4f2f0" stroke-width="5"/><rect x="2064" y="618" width="48" height="80" fill="#e7e5e2"/><path d="M1912 655 Q1912 550 1995 548 Q2075 552 2078 655 L2086 845 L1905 845Z" fill="#583d2e"/><path d="M1964 704 L2032 704 L2030 792 L1992 822 L1966 792Z" fill="#cf9f83"/><ellipse cx="2000" cy="650" rx="52" ry="68" fill="url(#sk)"/><path d="M1950 622 Q1960 562 2002 562 Q2046 566 2052 620 L2042 590 Q2000 575 1960 598Z" fill="#583d2e"/><circle cx="1978" cy="638" r="13" fill="none" stroke="#b07b58" stroke-width="3.2"/><circle cx="2024" cy="638" r="13" fill="none" stroke="#b07b58" stroke-width="3.2"/><path d="M1984 676 Q2001 688 2018 676" fill="none" stroke="#f6f3f0" stroke-width="6"/><path d="M1905 792 Q1930 782 1966 792 L1998 828 L2032 792 Q2060 782 2080 802 L2082 1090 L1905 1090Z" fill="url(#fl2)"/><rect x="2030" y="842" width="50" height="250" fill="#121010"/><path d="M2042 848 Q2062 848 2064 872 L2012 1062 L1980 1062 Z" fill="#c8977c"/><path d="M1930 1042 Q1960 1032 2002 1052 L2012 1090 L1925 1090Z" fill="#cf9f83"/><path d="M2134 645 Q2134 574 2206 574 Q2280 578 2282 655 L2292 825 L2130 825Z" fill="#191614"/><path d="M2182 745 L2234 745 L2230 795 L2186 795Z" fill="#cf9979"/><ellipse cx="2207" cy="685" rx="56" ry="73" fill="url(#sk2)"/><path d="M2150 655 Q2160 598 2210 598 Q2262 600 2266 655 L2258 622 Q2210 594 2158 624Z" fill="#191614"/><path d="M2188 732 Q2207 744 2226 732" fill="none" stroke="#f6f3f0" stroke-width="6"/><path d="M2070 758 Q2110 740 2160 762 L2207 852 L2262 762 Q2310 742 2354 764 L2367 1090 L2066 1090Z" fill="url(#fl)"/><path d="M2078 818 Q2100 803 2118 833 L2150 1090 L2094 1090Z" fill="#c79070"/><path d="M2348 832 Q2330 832 2318 862 L2272 1090 L2342 1090Z" fill="#c8916f"/><path d="M2348 655 Q2346 574 2418 572 Q2488 576 2490 655 L2492 722 L2350 722Z" fill="#a2846b"/><path d="M2346 748 L2400 740 L2440 762 L2500 750 L2515 762 L2515 1090 L2345 1090Z" fill="#121010"/><path d="M2392 746 L2402 740 Q2420 754 2450 750 L2496 757 L2436 907 L2398 862Z" fill="#d9ae97"/><ellipse cx="2424" cy="681" rx="52" ry="70" fill="url(#sk3)"/><path d="M2376 645 Q2390 606 2424 606 Q2462 608 2470 645 L2466 620 Q2424 592 2380 622Z" fill="#a2846b"/><circle cx="2402" cy="664" r="14" fill="none" stroke="#d5a597" stroke-width="3"/><circle cx="2446" cy="664" r="14" fill="none" stroke="#d5a597" stroke-width="3"/><path d="M2406 714 Q2424 726 2442 714" fill="none" stroke="#f6f3f0" stroke-width="6"/><path d="M2342 822 Q2356 822 2372 837 L2378 1090 L2346 1090Z" fill="#c79c86"/><ellipse cx="1968.0" cy="456" rx="5.0" ry="2.3" fill="#3a2a24" opacity=".8"/><path d="M1960.8 448.1 Q1968.0 444.5 1975.2 448.1" fill="none" stroke="#4a3328" stroke-width="2.5" opacity=".7"/><ellipse cx="2004.0" cy="456" rx="5.0" ry="2.3" fill="#3a2a24" opacity=".8"/><path d="M1996.8 448.1 Q2004.0 444.5 2011.2 448.1" fill="none" stroke="#4a3328" stroke-width="2.5" opacity=".7"/><path d="M1986.0 459.6 L1983.1 472.2 L1988.2 472.9" fill="none" stroke="#b0795d" stroke-width="1.6" opacity=".6"/><ellipse cx="2069.0" cy="452" rx="3.6" ry="1.7" fill="#3a2a24" opacity=".8"/><path d="M2063.8 446.3 Q2069.0 443.7 2074.2 446.3" fill="none" stroke="#4a3328" stroke-width="1.8" opacity=".7"/><ellipse cx="2095.0" cy="452" rx="3.6" ry="1.7" fill="#3a2a24" opacity=".8"/><path d="M2089.8 446.3 Q2095.0 443.7 2100.2 446.3" fill="none" stroke="#4a3328" stroke-width="1.8" opacity=".7"/><path d="M2082.0 454.6 L2079.9 463.7 L2083.6 464.2" fill="none" stroke="#b0795d" stroke-width="1.6" opacity=".6"/><ellipse cx="2112.0" cy="400" rx="3.4" ry="1.6" fill="#3a2a24" opacity=".8"/><path d="M2107.2 394.7 Q2112.0 392.3 2116.8 394.7" fill="none" stroke="#4a3328" stroke-width="1.7" opacity=".7"/><ellipse cx="2136.0" cy="400" rx="3.4" ry="1.6" fill="#3a2a24" opacity=".8"/><path d="M2131.2 394.7 Q2136.0 392.3 2140.8 394.7" fill="none" stroke="#4a3328" stroke-width="1.7" opacity=".7"/><path d="M2124.0 402.4 L2122.1 410.8 L2125.4 411.3" fill="none" stroke="#b0795d" stroke-width="1.6" opacity=".6"/><ellipse cx="2167.0" cy="436" rx="3.6" ry="1.7" fill="#3a2a24" opacity=".8"/><path d="M2161.8 430.3 Q2167.0 427.7 2172.2 430.3" fill="none" stroke="#4a3328" stroke-width="1.8" opacity=".7"/><ellipse cx="2193.0" cy="436" rx="3.6" ry="1.7" fill="#3a2a24" opacity=".8"/><path d="M2187.8 430.3 Q2193.0 427.7 2198.2 430.3" fill="none" stroke="#4a3328" stroke-width="1.8" opacity=".7"/><path d="M2180.0 438.6 L2177.9 447.7 L2181.6 448.2" fill="none" stroke="#b0795d" stroke-width="1.6" opacity=".6"/><ellipse cx="2258.0" cy="470" rx="3.9" ry="1.8" fill="#3a2a24" opacity=".8"/><path d="M2252.4 463.8 Q2258.0 461.0 2263.6 463.8" fill="none" stroke="#4a3328" stroke-width="2.0" opacity=".7"/><ellipse cx="2286.0" cy="470" rx="3.9" ry="1.8" fill="#3a2a24" opacity=".8"/><path d="M2280.4 463.8 Q2286.0 461.0 2291.6 463.8" fill="none" stroke="#4a3328" stroke-width="2.0" opacity=".7"/><path d="M2272.0 472.8 L2269.8 482.6 L2273.7 483.2" fill="none" stroke="#b0795d" stroke-width="1.6" opacity=".6"/><ellipse cx="2336.0" cy="398" rx="4.8" ry="2.2" fill="#3a2a24" opacity=".8"/><path d="M2329.2 390.5 Q2336.0 387.1 2342.8 390.5" fill="none" stroke="#4a3328" stroke-width="2.4" opacity=".7"/><ellipse cx="2370.0" cy="398" rx="4.8" ry="2.2" fill="#3a2a24" opacity=".8"/><path d="M2363.2 390.5 Q2370.0 387.1 2376.8 390.5" fill="none" stroke="#4a3328" stroke-width="2.4" opacity=".7"/><path d="M2353.0 401.4 L2350.3 413.3 L2355.0 414.0" fill="none" stroke="#b0795d" stroke-width="1.6" opacity=".6"/><ellipse cx="2405.0" cy="498" rx="5.3" ry="2.5" fill="#3a2a24" opacity=".8"/><path d="M2397.4 489.6 Q2405.0 485.8 2412.6 489.6" fill="none" stroke="#4a3328" stroke-width="2.7" opacity=".7"/><ellipse cx="2443.0" cy="498" rx="5.3" ry="2.5" fill="#3a2a24" opacity=".8"/><path d="M2435.4 489.6 Q2443.0 485.8 2450.6 489.6" fill="none" stroke="#4a3328" stroke-width="2.7" opacity=".7"/><path d="M2424.0 501.8 L2421.0 515.1 L2426.3 515.9" fill="none" stroke="#b0795d" stroke-width="1.6" opacity=".6"/><ellipse cx="2228.0" cy="540" rx="5.0" ry="2.3" fill="#3a2a24" opacity=".8"/><path d="M2220.8 532.1 Q2228.0 528.5 2235.2 532.1" fill="none" stroke="#4a3328" stroke-width="2.5" opacity=".7"/><ellipse cx="2264.0" cy="540" rx="5.0" ry="2.3" fill="#3a2a24" opacity=".8"/><path d="M2256.8 532.1 Q2264.0 528.5 2271.2 532.1" fill="none" stroke="#4a3328" stroke-width="2.5" opacity=".7"/><path d="M2246.0 543.6 L2243.1 556.2 L2248.2 556.9" fill="none" stroke="#b0795d" stroke-width="1.6" opacity=".6"/><ellipse cx="2078.0" cy="550" rx="5.6" ry="2.6" fill="#3a2a24" opacity=".8"/><path d="M2070.0 541.2 Q2078.0 537.2 2086.0 541.2" fill="none" stroke="#4a3328" stroke-width="2.8" opacity=".7"/><ellipse cx="2118.0" cy="550" rx="5.6" ry="2.6" fill="#3a2a24" opacity=".8"/><path d="M2110.0 541.2 Q2118.0 537.2 2126.0 541.2" fill="none" stroke="#4a3328" stroke-width="2.8" opacity=".7"/><path d="M2098.0 554.0 L2094.8 568.0 L2100.4 568.8" fill="none" stroke="#b0795d" stroke-width="1.6" opacity=".6"/><ellipse cx="1978.0" cy="638" rx="6.2" ry="2.9" fill="#3a2a24" opacity=".8"/><path d="M1969.2 628.3 Q1978.0 623.9 1986.8 628.3" fill="none" stroke="#4a3328" stroke-width="3.1" opacity=".7"/><ellipse cx="2022.0" cy="638" rx="6.2" ry="2.9" fill="#3a2a24" opacity=".8"/><path d="M2013.2 628.3 Q2022.0 623.9 2030.8 628.3" fill="none" stroke="#4a3328" stroke-width="3.1" opacity=".7"/><path d="M2000.0 642.4 L1996.5 657.8 L2002.6 658.7" fill="none" stroke="#b0795d" stroke-width="1.6" opacity=".6"/><ellipse cx="2183.0" cy="668" rx="6.7" ry="3.1" fill="#3a2a24" opacity=".8"/><path d="M2173.4 657.4 Q2183.0 652.6 2192.6 657.4" fill="none" stroke="#4a3328" stroke-width="3.4" opacity=".7"/><ellipse cx="2231.0" cy="668" rx="6.7" ry="3.1" fill="#3a2a24" opacity=".8"/><path d="M2221.4 657.4 Q2231.0 652.6 2240.6 657.4" fill="none" stroke="#4a3328" stroke-width="3.4" opacity=".7"/><path d="M2207.0 672.8 L2203.2 689.6 L2209.9 690.6" fill="none" stroke="#b0795d" stroke-width="1.6" opacity=".6"/><ellipse cx="2402.0" cy="664" rx="6.2" ry="2.9" fill="#3a2a24" opacity=".8"/><path d="M2393.2 654.3 Q2402.0 649.9 2410.8 654.3" fill="none" stroke="#4a3328" stroke-width="3.1" opacity=".7"/><ellipse cx="2446.0" cy="664" rx="6.2" ry="2.9" fill="#3a2a24" opacity=".8"/><path d="M2437.2 654.3 Q2446.0 649.9 2454.8 654.3" fill="none" stroke="#4a3328" stroke-width="3.1" opacity=".7"/><path d="M2424.0 668.4 L2420.5 683.8 L2426.6 684.7" fill="none" stroke="#b0795d" stroke-width="1.6" opacity=".6"/></g></svg></div>
<div class="a" style="left:1076.8px;top:372.5px;width:55px;height:55.5px;border-radius:50%;background:#fff"></div>
<div class="t" style="left:1085px;top:365.5px;font-size:59px;font-weight:700;font-style:italic;color:#2a4f36;line-height:60px">n</div>
<div class="t " style="left:1141.8px;top:379.5px;font-size:35.00px;color:#fff;font-weight:400;letter-spacing:5.35px;">northpoint</div>
<div class="t " style="left:1061.0px;top:611.6px;font-size:115.99px;color:#a9f971;font-weight:700;letter-spacing:0.00px;transform:scaleX(1.0238);transform-origin:0 0;">Inside Our</div>
<div class="t " style="left:1063.5px;top:716.8px;font-size:116.28px;color:#a9f971;font-weight:700;letter-spacing:0.00px;transform:scaleX(1.0823);transform-origin:0 0;">Team</div>
<div class="a" style="left:1069px;top:865px;width:598.7px;height:4.5px;background:#a0ec6c"></div>
<div class="t " style="left:1066.1px;top:899.6px;font-size:42.88px;color:#fff;font-weight:400;letter-spacing:0.00px;transform:scaleX(1.0326);transform-origin:0 0;">Operations &amp; Delivery</div>
<div class="t " style="left:1067.1px;top:950.3px;font-size:42.88px;color:#fff;font-weight:400;letter-spacing:0.00px;transform:scaleX(1.0554);transform-origin:0 0;">at Our Company</div>
<div class="a" style="left:239px;top:230px;width:162px;height:89.5px;border-radius:10px;overflow:hidden;background:#2a4f36"><div style="position:absolute;left:0;top:0;width:3024px;height:1530px;transform:scale(0.09524,0.0945) translate(-884px,-206px);transform-origin:0 0"><div class="a" style="left:884px;top:206px;width:1701px;height:953px;background:#2a4f36"></div><div class="a" style="left:954px;top:277.5px;width:1562px;height:812.0px;border:3.5px solid #86d763;border-radius:38px"></div><div class="a" style="left:950px;top:690px;width:12px;height:60px;background:#2a4f36"></div><div class="a" id="photo" style="left:1908px;top:281px;width:604.5px;height:805px;border-radius:0 34px 34px 0;overflow:hidden;background:#b9b6b4"><svg style="left:0;top:0" width="604.5" height="805" viewBox="1908 281 604.5 805" preserveAspectRatio="none"><defs><filter id="bl" x="-5%" y="-5%" width="110%" height="110%"><feGaussianBlur stdDeviation="1.8"/></filter><pattern id="fl" width="9" height="9" patternUnits="userSpaceOnUse"><rect width="9" height="9" fill="#2c373d"/><circle cx="2" cy="2" r="1.3" fill="#b8858a"/><circle cx="6.5" cy="6" r="1.1" fill="#9c7b80"/><circle cx="7" cy="1.5" r="0.6" fill="#cbb9b7"/></pattern><pattern id="fl2" width="14" height="14" patternUnits="userSpaceOnUse"><rect width="14" height="14" fill="#161414"/><ellipse cx="4" cy="4" rx="2.6" ry="1.4" fill="#4e4148"/><circle cx="10" cy="10" r="1.4" fill="#7d5c63"/></pattern><pattern id="fl3" width="8" height="8" patternUnits="userSpaceOnUse"><rect width="8" height="8" fill="#e2d3cb"/><circle cx="2" cy="3" r="1.2" fill="#c98d8f"/><circle cx="6" cy="6" r="1" fill="#b7a39a"/></pattern><radialGradient id="sk" cx="50%" cy="45%" r="55%"><stop offset="0" stop-color="#e9c1a6"/><stop offset=".7" stop-color="#d8a98b"/><stop offset="1" stop-color="#b98669"/></radialGradient><radialGradient id="sk2" cx="50%" cy="45%" r="55%"><stop offset="0" stop-color="#e6b796"/><stop offset=".7" stop-color="#d39f7e"/><stop offset="1" stop-color="#ad7a5b"/></radialGradient><radialGradient id="sk3" cx="50%" cy="45%" r="55%"><stop offset="0" stop-color="#f0d0bf"/><stop offset=".7" stop-color="#e3b9a3"/><stop offset="1" stop-color="#c69882"/></radialGradient><linearGradient id="wall" x1="0" y1="0" x2="0" y2="1"><stop offset="0" stop-color="#e3e2df"/><stop offset=".12" stop-color="#d6d6d3"/><stop offset=".16" stop-color="#b8c3be"/><stop offset=".4" stop-color="#aebbb6"/><stop offset="1" stop-color="#8f9a95"/></linearGradient></defs><g filter="url(#bl)"><rect x="1900" y="270" width="620" height="820" fill="url(#wall)"/><path d="M1900 300 L2520 292 M1900 340 L2520 332 M2020 270 L2000 372 M2200 270 L2200 372 M2380 270 L2400 372" stroke="#c9c8c5" stroke-width="1.5"/><rect x="1966" y="311" width="173" height="11" rx="3" fill="#fbfbfa"/><rect x="2031" y="345" width="121" height="8" rx="3" fill="#fbfbfa"/><rect x="2249" y="281" width="217" height="15" rx="3" fill="#fbfbfa"/><rect x="2227" y="338" width="102" height="10" rx="3" fill="#fbfbfa"/><rect x="2230" y="359" width="79" height="6" rx="3" fill="#fbfbfa"/><rect x="1905" y="384" width="44" height="140" fill="#cfcfcb"/><rect x="1915" y="432" width="26" height="46" fill="#d69f7c"/><rect x="1918" y="440" width="8" height="30" fill="#7fb5c8"/><rect x="1908" y="481" width="38" height="26" fill="#222326"/><rect x="1905" y="506" width="42" height="14" fill="#5b6476"/><rect x="2270" y="402" width="40" height="30" fill="#e4e6e6"/><rect x="2395" y="420" width="50" height="25" fill="#d9c8a8"/><ellipse cx="2500" cy="480" rx="16" ry="30" fill="#5d8a4c"/><ellipse cx="2302" cy="432" rx="20" ry="26" fill="url(#sk2)"/><path d="M2280 424 Q2288 398 2310 400 Q2330 408 2326 430 Q2310 412 2290 420Z" fill="#4b3a30"/><rect x="2104" y="440" width="44" height="70" fill="#c9a088"/><ellipse cx="2124" cy="406" rx="27" ry="38" fill="url(#sk)"/><path d="M2094 392 Q2098 360 2126 360 Q2154 362 2156 392 Q2140 376 2122 378 Q2104 380 2094 392Z" fill="#8a6a50"/><path d="M2140 425 Q2142 380 2180 378 Q2222 382 2222 432 L2226 525 L2140 525Z" fill="#a98865"/><ellipse cx="2180" cy="444" rx="29" ry="41" fill="url(#sk3)"/><path d="M2150 430 Q2160 392 2190 396 Q2170 400 2158 440Z" fill="#a98865"/><rect x="2148" y="492" width="70" height="95" fill="#4a3e3c"/><path d="M2294 470 Q2330 455 2352 458 Q2378 456 2406 470 L2410 625 L2290 625Z" fill="#e5e1dd"/><rect x="2334" y="440" width="36" height="28" fill="#c08d70"/><ellipse cx="2353" cy="410" rx="40" ry="47" fill="url(#sk2)"/><path d="M2308 400 Q2300 334 2352 334 Q2398 336 2394 398 Q2388 368 2356 364 Q2318 366 2308 400Z" fill="#2b211c"/><path d="M2226 482 Q2228 426 2274 424 Q2318 428 2318 482 L2318 545 L2226 545Z" fill="#b39371"/><ellipse cx="2272" cy="480" rx="33" ry="38" fill="url(#sk3)"/><circle cx="2257" cy="470" r="10" fill="none" stroke="#3d302b" stroke-width="2.6"/><circle cx="2286" cy="470" r="10" fill="none" stroke="#3d302b" stroke-width="2.6"/><path d="M2040 452 Q2040 396 2080 396 Q2120 398 2120 452 L2120 512 L2040 512Z" fill="#5b4132"/><ellipse cx="2082" cy="458" rx="28" ry="38" fill="url(#sk3)"/><path d="M2054 440 Q2080 412 2112 440 L2112 425 Q2080 398 2052 425Z" fill="#5b4132"/><circle cx="2070" cy="452" r="9" fill="none" stroke="#3a3838" stroke-width="2.2"/><circle cx="2095" cy="452" r="9" fill="none" stroke="#3a3838" stroke-width="2.2"/><path d="M2368 525 Q2366 434 2428 432 Q2488 436 2490 525 L2498 625 L2372 625Z" fill="#7b5c45"/><ellipse cx="2424" cy="508" rx="42" ry="53" fill="url(#sk3)"/><path d="M2384 478 Q2424 446 2468 480 L2470 458 Q2430 432 2380 460Z" fill="#7b5c45"/><circle cx="2404" cy="498" r="13" fill="none" stroke="#3b2d28" stroke-width="3.4"/><circle cx="2444" cy="498" r="13" fill="none" stroke="#3b2d28" stroke-width="3.4"/><rect x="2478" y="580" width="40" height="125" fill="url(#fl3)"/><path d="M1900 525 Q1930 500 1990 505 Q2040 508 2064 525 L2070 665 L1900 665Z" fill="#a7b4c6"/><path d="M1962 522 L1990 556 L2018 522Z" fill="#e7e5e2"/><rect x="1966" y="495" width="40" height="25" fill="#c89578"/><ellipse cx="1986" cy="462" rx="37" ry="50" fill="url(#sk)"/><path d="M1930 450 Q1922 378 1980 376 Q2038 378 2034 448 Q2024 412 1988 410 Q1946 412 1938 458Z" fill="#3e2b20"/><circle cx="1967" cy="456" r="11" fill="none" stroke="#1d1b1b" stroke-width="4"/><circle cx="2005" cy="456" r="11" fill="none" stroke="#1d1b1b" stroke-width="4"/><path d="M1972 484 Q1987 494 2002 484" fill="none" stroke="#f4f2f0" stroke-width="5"/><path d="M2192 562 Q2188 476 2256 474 Q2318 478 2318 562 L2324 672 L2196 672Z" fill="#b89573"/><ellipse cx="2246" cy="549" rx="41" ry="49" fill="url(#sk3)"/><path d="M2270 592 L2358 602 L2372 785 L2270 785Z" fill="#1c1a1a"/><path d="M2042 565 Q2040 486 2100 484 Q2160 488 2160 572 L2166 705 L2046 705Z" fill="#1c1816"/><ellipse cx="2098" cy="560" rx="44" ry="50" fill="url(#sk)"/><path d="M2056 545 Q2070 500 2110 500 Q2150 505 2150 545 L2150 515 Q2120 486 2090 488 Q2058 495 2056 545Z" fill="#1c1816"/><path d="M2082 584 Q2098 594 2114 584" fill="none" stroke="#f4f2f0" stroke-width="5"/><rect x="2064" y="618" width="48" height="80" fill="#e7e5e2"/><path d="M1912 655 Q1912 550 1995 548 Q2075 552 2078 655 L2086 845 L1905 845Z" fill="#583d2e"/><path d="M1964 704 L2032 704 L2030 792 L1992 822 L1966 792Z" fill="#cf9f83"/><ellipse cx="2000" cy="650" rx="52" ry="68" fill="url(#sk)"/><path d="M1950 622 Q1960 562 2002 562 Q2046 566 2052 620 L2042 590 Q2000 575 1960 598Z" fill="#583d2e"/><circle cx="1978" cy="638" r="13" fill="none" stroke="#b07b58" stroke-width="3.2"/><circle cx="2024" cy="638" r="13" fill="none" stroke="#b07b58" stroke-width="3.2"/><path d="M1984 676 Q2001 688 2018 676" fill="none" stroke="#f6f3f0" stroke-width="6"/><path d="M1905 792 Q1930 782 1966 792 L1998 828 L2032 792 Q2060 782 2080 802 L2082 1090 L1905 1090Z" fill="url(#fl2)"/><rect x="2030" y="842" width="50" height="250" fill="#121010"/><path d="M2042 848 Q2062 848 2064 872 L2012 1062 L1980 1062 Z" fill="#c8977c"/><path d="M1930 1042 Q1960 1032 2002 1052 L2012 1090 L1925 1090Z" fill="#cf9f83"/><path d="M2134 645 Q2134 574 2206 574 Q2280 578 2282 655 L2292 825 L2130 825Z" fill="#191614"/><path d="M2182 745 L2234 745 L2230 795 L2186 795Z" fill="#cf9979"/><ellipse cx="2207" cy="685" rx="56" ry="73" fill="url(#sk2)"/><path d="M2150 655 Q2160 598 2210 598 Q2262 600 2266 655 L2258 622 Q2210 594 2158 624Z" fill="#191614"/><path d="M2188 732 Q2207 744 2226 732" fill="none" stroke="#f6f3f0" stroke-width="6"/><path d="M2070 758 Q2110 740 2160 762 L2207 852 L2262 762 Q2310 742 2354 764 L2367 1090 L2066 1090Z" fill="url(#fl)"/><path d="M2078 818 Q2100 803 2118 833 L2150 1090 L2094 1090Z" fill="#c79070"/><path d="M2348 832 Q2330 832 2318 862 L2272 1090 L2342 1090Z" fill="#c8916f"/><path d="M2348 655 Q2346 574 2418 572 Q2488 576 2490 655 L2492 722 L2350 722Z" fill="#a2846b"/><path d="M2346 748 L2400 740 L2440 762 L2500 750 L2515 762 L2515 1090 L2345 1090Z" fill="#121010"/><path d="M2392 746 L2402 740 Q2420 754 2450 750 L2496 757 L2436 907 L2398 862Z" fill="#d9ae97"/><ellipse cx="2424" cy="681" rx="52" ry="70" fill="url(#sk3)"/><path d="M2376 645 Q2390 606 2424 606 Q2462 608 2470 645 L2466 620 Q2424 592 2380 622Z" fill="#a2846b"/><circle cx="2402" cy="664" r="14" fill="none" stroke="#d5a597" stroke-width="3"/><circle cx="2446" cy="664" r="14" fill="none" stroke="#d5a597" stroke-width="3"/><path d="M2406 714 Q2424 726 2442 714" fill="none" stroke="#f6f3f0" stroke-width="6"/><path d="M2342 822 Q2356 822 2372 837 L2378 1090 L2346 1090Z" fill="#c79c86"/><ellipse cx="1968.0" cy="456" rx="5.0" ry="2.3" fill="#3a2a24" opacity=".8"/><path d="M1960.8 448.1 Q1968.0 444.5 1975.2 448.1" fill="none" stroke="#4a3328" stroke-width="2.5" opacity=".7"/><ellipse cx="2004.0" cy="456" rx="5.0" ry="2.3" fill="#3a2a24" opacity=".8"/><path d="M1996.8 448.1 Q2004.0 444.5 2011.2 448.1" fill="none" stroke="#4a3328" stroke-width="2.5" opacity=".7"/><path d="M1986.0 459.6 L1983.1 472.2 L1988.2 472.9" fill="none" stroke="#b0795d" stroke-width="1.6" opacity=".6"/><ellipse cx="2069.0" cy="452" rx="3.6" ry="1.7" fill="#3a2a24" opacity=".8"/><path d="M2063.8 446.3 Q2069.0 443.7 2074.2 446.3" fill="none" stroke="#4a3328" stroke-width="1.8" opacity=".7"/><ellipse cx="2095.0" cy="452" rx="3.6" ry="1.7" fill="#3a2a24" opacity=".8"/><path d="M2089.8 446.3 Q2095.0 443.7 2100.2 446.3" fill="none" stroke="#4a3328" stroke-width="1.8" opacity=".7"/><path d="M2082.0 454.6 L2079.9 463.7 L2083.6 464.2" fill="none" stroke="#b0795d" stroke-width="1.6" opacity=".6"/><ellipse cx="2112.0" cy="400" rx="3.4" ry="1.6" fill="#3a2a24" opacity=".8"/><path d="M2107.2 394.7 Q2112.0 392.3 2116.8 394.7" fill="none" stroke="#4a3328" stroke-width="1.7" opacity=".7"/><ellipse cx="2136.0" cy="400" rx="3.4" ry="1.6" fill="#3a2a24" opacity=".8"/><path d="M2131.2 394.7 Q2136.0 392.3 2140.8 394.7" fill="none" stroke="#4a3328" stroke-width="1.7" opacity=".7"/><path d="M2124.0 402.4 L2122.1 410.8 L2125.4 411.3" fill="none" stroke="#b0795d" stroke-width="1.6" opacity=".6"/><ellipse cx="2167.0" cy="436" rx="3.6" ry="1.7" fill="#3a2a24" opacity=".8"/><path d="M2161.8 430.3 Q2167.0 427.7 2172.2 430.3" fill="none" stroke="#4a3328" stroke-width="1.8" opacity=".7"/><ellipse cx="2193.0" cy="436" rx="3.6" ry="1.7" fill="#3a2a24" opacity=".8"/><path d="M2187.8 430.3 Q2193.0 427.7 2198.2 430.3" fill="none" stroke="#4a3328" stroke-width="1.8" opacity=".7"/><path d="M2180.0 438.6 L2177.9 447.7 L2181.6 448.2" fill="none" stroke="#b0795d" stroke-width="1.6" opacity=".6"/><ellipse cx="2258.0" cy="470" rx="3.9" ry="1.8" fill="#3a2a24" opacity=".8"/><path d="M2252.4 463.8 Q2258.0 461.0 2263.6 463.8" fill="none" stroke="#4a3328" stroke-width="2.0" opacity=".7"/><ellipse cx="2286.0" cy="470" rx="3.9" ry="1.8" fill="#3a2a24" opacity=".8"/><path d="M2280.4 463.8 Q2286.0 461.0 2291.6 463.8" fill="none" stroke="#4a3328" stroke-width="2.0" opacity=".7"/><path d="M2272.0 472.8 L2269.8 482.6 L2273.7 483.2" fill="none" stroke="#b0795d" stroke-width="1.6" opacity=".6"/><ellipse cx="2336.0" cy="398" rx="4.8" ry="2.2" fill="#3a2a24" opacity=".8"/><path d="M2329.2 390.5 Q2336.0 387.1 2342.8 390.5" fill="none" stroke="#4a3328" stroke-width="2.4" opacity=".7"/><ellipse cx="2370.0" cy="398" rx="4.8" ry="2.2" fill="#3a2a24" opacity=".8"/><path d="M2363.2 390.5 Q2370.0 387.1 2376.8 390.5" fill="none" stroke="#4a3328" stroke-width="2.4" opacity=".7"/><path d="M2353.0 401.4 L2350.3 413.3 L2355.0 414.0" fill="none" stroke="#b0795d" stroke-width="1.6" opacity=".6"/><ellipse cx="2405.0" cy="498" rx="5.3" ry="2.5" fill="#3a2a24" opacity=".8"/><path d="M2397.4 489.6 Q2405.0 485.8 2412.6 489.6" fill="none" stroke="#4a3328" stroke-width="2.7" opacity=".7"/><ellipse cx="2443.0" cy="498" rx="5.3" ry="2.5" fill="#3a2a24" opacity=".8"/><path d="M2435.4 489.6 Q2443.0 485.8 2450.6 489.6" fill="none" stroke="#4a3328" stroke-width="2.7" opacity=".7"/><path d="M2424.0 501.8 L2421.0 515.1 L2426.3 515.9" fill="none" stroke="#b0795d" stroke-width="1.6" opacity=".6"/><ellipse cx="2228.0" cy="540" rx="5.0" ry="2.3" fill="#3a2a24" opacity=".8"/><path d="M2220.8 532.1 Q2228.0 528.5 2235.2 532.1" fill="none" stroke="#4a3328" stroke-width="2.5" opacity=".7"/><ellipse cx="2264.0" cy="540" rx="5.0" ry="2.3" fill="#3a2a24" opacity=".8"/><path d="M2256.8 532.1 Q2264.0 528.5 2271.2 532.1" fill="none" stroke="#4a3328" stroke-width="2.5" opacity=".7"/><path d="M2246.0 543.6 L2243.1 556.2 L2248.2 556.9" fill="none" stroke="#b0795d" stroke-width="1.6" opacity=".6"/><ellipse cx="2078.0" cy="550" rx="5.6" ry="2.6" fill="#3a2a24" opacity=".8"/><path d="M2070.0 541.2 Q2078.0 537.2 2086.0 541.2" fill="none" stroke="#4a3328" stroke-width="2.8" opacity=".7"/><ellipse cx="2118.0" cy="550" rx="5.6" ry="2.6" fill="#3a2a24" opacity=".8"/><path d="M2110.0 541.2 Q2118.0 537.2 2126.0 541.2" fill="none" stroke="#4a3328" stroke-width="2.8" opacity=".7"/><path d="M2098.0 554.0 L2094.8 568.0 L2100.4 568.8" fill="none" stroke="#b0795d" stroke-width="1.6" opacity=".6"/><ellipse cx="1978.0" cy="638" rx="6.2" ry="2.9" fill="#3a2a24" opacity=".8"/><path d="M1969.2 628.3 Q1978.0 623.9 1986.8 628.3" fill="none" stroke="#4a3328" stroke-width="3.1" opacity=".7"/><ellipse cx="2022.0" cy="638" rx="6.2" ry="2.9" fill="#3a2a24" opacity=".8"/><path d="M2013.2 628.3 Q2022.0 623.9 2030.8 628.3" fill="none" stroke="#4a3328" stroke-width="3.1" opacity=".7"/><path d="M2000.0 642.4 L1996.5 657.8 L2002.6 658.7" fill="none" stroke="#b0795d" stroke-width="1.6" opacity=".6"/><ellipse cx="2183.0" cy="668" rx="6.7" ry="3.1" fill="#3a2a24" opacity=".8"/><path d="M2173.4 657.4 Q2183.0 652.6 2192.6 657.4" fill="none" stroke="#4a3328" stroke-width="3.4" opacity=".7"/><ellipse cx="2231.0" cy="668" rx="6.7" ry="3.1" fill="#3a2a24" opacity=".8"/><path d="M2221.4 657.4 Q2231.0 652.6 2240.6 657.4" fill="none" stroke="#4a3328" stroke-width="3.4" opacity=".7"/><path d="M2207.0 672.8 L2203.2 689.6 L2209.9 690.6" fill="none" stroke="#b0795d" stroke-width="1.6" opacity=".6"/><ellipse cx="2402.0" cy="664" rx="6.2" ry="2.9" fill="#3a2a24" opacity=".8"/><path d="M2393.2 654.3 Q2402.0 649.9 2410.8 654.3" fill="none" stroke="#4a3328" stroke-width="3.1" opacity=".7"/><ellipse cx="2446.0" cy="664" rx="6.2" ry="2.9" fill="#3a2a24" opacity=".8"/><path d="M2437.2 654.3 Q2446.0 649.9 2454.8 654.3" fill="none" stroke="#4a3328" stroke-width="3.1" opacity=".7"/><path d="M2424.0 668.4 L2420.5 683.8 L2426.6 684.7" fill="none" stroke="#b0795d" stroke-width="1.6" opacity=".6"/></g></svg></div><div class="a" style="left:1076.8px;top:372.5px;width:55px;height:55.5px;border-radius:50%;background:#fff"></div><div class="t" style="left:1085px;top:365.5px;font-size:59px;font-weight:700;font-style:italic;color:#2a4f36;line-height:60px">n</div><div class="t " style="left:1141.8px;top:379.5px;font-size:35.00px;color:#fff;font-weight:400;letter-spacing:5.35px;">northpoint</div><div class="t " style="left:1061.0px;top:611.6px;font-size:115.99px;color:#a9f971;font-weight:700;letter-spacing:0.00px;transform:scaleX(1.0238);transform-origin:0 0;">Inside Our</div><div class="t " style="left:1063.5px;top:716.8px;font-size:116.28px;color:#a9f971;font-weight:700;letter-spacing:0.00px;transform:scaleX(1.0823);transform-origin:0 0;">Team</div><div class="a" style="left:1069px;top:865px;width:598.7px;height:4.5px;background:#a0ec6c"></div><div class="t " style="left:1066.1px;top:899.6px;font-size:42.88px;color:#fff;font-weight:400;letter-spacing:0.00px;transform:scaleX(1.0326);transform-origin:0 0;">Operations &amp; Delivery</div><div class="t " style="left:1067.1px;top:950.3px;font-size:42.88px;color:#fff;font-weight:400;letter-spacing:0.00px;transform:scaleX(1.0554);transform-origin:0 0;">at Our Company</div></div></div>
<svg style="left:2626px;top:1123px" width="17" height="21" viewBox="0 0 17 21"><path d="M0.5 0.5 L16.5 10.3 L0.5 20.5Z" fill="#000"/></svg>
<div class="a" style="left:2974px;top:570.5px;width:37px;height:165px;background:#f2eeef;border-radius:36px 0 0 36px"></div>
<svg style="left:2987px;top:646px" width="11" height="16" viewBox="0 0 11 16"><path d="M9 2 L2.5 8 L9 14" fill="none" stroke="#0b0f4a" stroke-width="3.2"/></svg>
<div class="a" style="left:145px;top:1220px;width:172px;height:1px;background:#e6e2e3"></div>
<div class="a" style="left:145px;top:1221px;width:172px;height:309px;background:#fff"></div>
<div class="a" style="left:317px;top:1221px;width:2477px;height:309px;background:#f3eff0"></div>
<div class="a" style="left:2794px;top:1220px;width:230px;height:310px;background:#fff;border-top:1px solid #e6e2e3"></div>
<div class="a" style="left:1501px;top:1184px;width:165px;height:37px;background:#f3eff0;border-radius:37px 37px 0 0"></div>
<svg style="left:1576px;top:1197px" width="17" height="12" viewBox="0 0 17 12"><path d="M2 2.5 L8.5 9 L15 2.5" fill="none" stroke="#0b0f4a" stroke-width="3"/></svg>
<div class="a" style="left:391.6px;top:1220px;width:2px;height:14px;background:#c8c9d8"></div><div class="a" style="left:463.6px;top:1220px;width:2px;height:14px;background:#c8c9d8"></div><div class="a" style="left:535.6px;top:1220px;width:2px;height:14px;background:#c8c9d8"></div><div class="a" style="left:607.6px;top:1220px;width:2px;height:14px;background:#c8c9d8"></div><div class="a" style="left:679.6px;top:1220px;width:2px;height:28px;background:#c8c9d8"></div><div class="a" style="left:751.6px;top:1220px;width:2px;height:14px;background:#c8c9d8"></div><div class="a" style="left:823.6px;top:1220px;width:2px;height:14px;background:#c8c9d8"></div><div class="a" style="left:895.6px;top:1220px;width:2px;height:14px;background:#c8c9d8"></div><div class="a" style="left:967.6px;top:1220px;width:2px;height:14px;background:#c8c9d8"></div><div class="a" style="left:1039.6px;top:1220px;width:2px;height:28px;background:#c8c9d8"></div><div class="a" style="left:1111.6px;top:1220px;width:2px;height:14px;background:#c8c9d8"></div><div class="a" style="left:1183.6px;top:1220px;width:2px;height:14px;background:#c8c9d8"></div><div class="a" style="left:1255.6px;top:1220px;width:2px;height:14px;background:#c8c9d8"></div><div class="a" style="left:1327.6px;top:1220px;width:2px;height:14px;background:#c8c9d8"></div><div class="a" style="left:1399.6px;top:1220px;width:2px;height:28px;background:#c8c9d8"></div><div class="a" style="left:1471.6px;top:1220px;width:2px;height:14px;background:#c8c9d8"></div><div class="a" style="left:1543.6px;top:1220px;width:2px;height:14px;background:#c8c9d8"></div><div class="a" style="left:1615.6px;top:1220px;width:2px;height:14px;background:#c8c9d8"></div><div class="a" style="left:1687.6px;top:1220px;width:2px;height:14px;background:#c8c9d8"></div><div class="a" style="left:1759.6px;top:1220px;width:2px;height:28px;background:#c8c9d8"></div><div class="a" style="left:1831.6px;top:1220px;width:2px;height:14px;background:#c8c9d8"></div><div class="a" style="left:1903.6px;top:1220px;width:2px;height:14px;background:#c8c9d8"></div><div class="a" style="left:1975.6px;top:1220px;width:2px;height:14px;background:#c8c9d8"></div><div class="a" style="left:2047.6px;top:1220px;width:2px;height:14px;background:#c8c9d8"></div><div class="a" style="left:2119.6px;top:1220px;width:2px;height:28px;background:#c8c9d8"></div><div class="a" style="left:2191.6px;top:1220px;width:2px;height:14px;background:#c8c9d8"></div><div class="a" style="left:2263.6px;top:1220px;width:2px;height:14px;background:#c8c9d8"></div><div class="a" style="left:2335.6px;top:1220px;width:2px;height:14px;background:#c8c9d8"></div><div class="a" style="left:2407.6px;top:1220px;width:2px;height:14px;background:#c8c9d8"></div><div class="a" style="left:2479.6px;top:1220px;width:2px;height:28px;background:#c8c9d8"></div><div class="a" style="left:2551.6px;top:1220px;width:2px;height:14px;background:#c8c9d8"></div><div class="a" style="left:2623.6px;top:1220px;width:2px;height:14px;background:#c8c9d8"></div><div class="a" style="left:2695.6px;top:1220px;width:2px;height:14px;background:#c8c9d8"></div><div class="a" style="left:2767.6px;top:1220px;width:2px;height:14px;background:#c8c9d8"></div>
<div class="t m" style="left:328.0px;top:1231.8px;font-size:18.02px;color:#7a7d9c;font-weight:400;letter-spacing:0.00px;">0s</div>
<div class="t m" style="left:688.0px;top:1231.8px;font-size:18.02px;color:#7a7d9c;font-weight:400;letter-spacing:0.00px;">5s</div>
<div class="t m" style="left:1047.0px;top:1231.8px;font-size:18.02px;color:#7a7d9c;font-weight:400;letter-spacing:0.00px;">10s</div>
<div class="t m" style="left:1407.0px;top:1231.8px;font-size:18.02px;color:#7a7d9c;font-weight:400;letter-spacing:0.00px;">15s</div>
<div class="t m" style="left:1768.0px;top:1231.8px;font-size:18.02px;color:#7a7d9c;font-weight:400;letter-spacing:0.00px;">20s</div>
<div class="t m" style="left:2128.0px;top:1231.8px;font-size:18.02px;color:#7a7d9c;font-weight:400;letter-spacing:0.00px;">25s</div>
<div class="t m" style="left:2488.0px;top:1231.8px;font-size:18.02px;color:#7a7d9c;font-weight:400;letter-spacing:0.00px;">30s</div>
<div class="t m" style="left:210.0px;top:1231.9px;font-size:17.88px;color:#7a7d9c;font-weight:400;letter-spacing:0.00px;transform:scaleX(0.9369);transform-origin:0 0;">37.5s</div>
<div class="a" style="left:322px;top:1262px;width:286px;height:118px;border-radius:13px;background:#5fcfd5"></div>
<div class="a" style="left:326px;top:1266px;width:278px;height:110px;border-radius:9px;background:#2a4f36"></div>
<div class="a" style="left:326px;top:1292px;width:278px;height:58px;background:#d4dcd7"></div>
<svg style="left:343.7px;top:1306px" width="34" height="31" viewBox="0 0 34 31"><rect x="7.6" y="1" width="17.9" height="9" rx="1.6" fill="#2f3566"/><path d="M7.6 9 V15.2 H16.2 V11.9 H10.7 V9Z" fill="#2f3566"/><path d="M10.7 12.4 L13.8 4.6 L15.8 7.2 L18.1 5.7 L20.9 10.6 L10.7 10.6Z" fill="#d4dcd7"/><circle cx="21.2" cy="5.6" r="1.7" fill="#d4dcd7"/><path d="M3.9 13.2 Q2 14.3 2 16.6 V26 Q2 28.3 4.3 28.3 H12.7" fill="none" stroke="#2f3566" stroke-width="2.9"/><path d="M9.2 17.7 L14.2 20.8 L9.2 24Z" fill="#2f3566"/><rect x="21.2" y="13.8" width="11.5" height="2.5" fill="#2f3566"/><path d="M22 15 V27 M31.8 15 V27" stroke="#2f3566" stroke-width="2"/><circle cx="19.8" cy="26.8" r="2.9" fill="#2f3566"/><circle cx="29.8" cy="26.8" r="2.9" fill="#2f3566"/></svg>
<div class="t m" style="left:393.8px;top:1308.9px;font-size:24.71px;color:#2f3566;font-weight:400;letter-spacing:0.00px;transform:scaleX(1.0815);transform-origin:0 0;">Inside ...</div>
<div class="a" style="left:502.8px;top:1303px;width:72px;height:35.5px;border-radius:7px;background:#faf6f6"></div>
<div class="t m" style="left:508.8px;top:1308.9px;font-size:24.71px;color:#2f3566;font-weight:400;letter-spacing:0.00px;">7</div>
<svg style="left:536.8px;top:1314px" width="18" height="12" viewBox="0 0 18 12"><path d="M2 2 L9 9 L16 2" fill="none" stroke="#2f3566" stroke-width="3"/></svg>
<div class="a" style="left:443.6px;top:1240px;width:42px;height:42px;border-radius:50%;background:#5fcfd5"></div>
<svg style="left:456px;top:1255px" width="18" height="11" viewBox="0 0 18 11"><path d="M2 9 L9 2 L16 9" fill="none" stroke="#0b0f4a" stroke-width="3"/></svg>
<div class="a" style="left:613px;top:1266px;width:459.0px;height:110px;border-radius:9px;background:#fff;box-shadow:0 2px 5px rgba(120,100,90,.10);"></div>
<div class="a" style="left:612px;top:1292px;width:461.0px;height:58px;background:#fff;box-shadow:0 3px 10px rgba(110,90,80,.10);"></div>
<svg style="left:631.0px;top:1306px" width="34" height="31" viewBox="0 0 34 31"><rect x="7.6" y="1" width="17.9" height="9" rx="1.6" fill="#2f3566"/><path d="M7.6 9 V15.2 H16.2 V11.9 H10.7 V9Z" fill="#2f3566"/><path d="M10.7 12.4 L13.8 4.6 L15.8 7.2 L18.1 5.7 L20.9 10.6 L10.7 10.6Z" fill="#fff"/><circle cx="21.2" cy="5.6" r="1.7" fill="#fff"/><path d="M3.9 13.2 Q2 14.3 2 16.6 V26 Q2 28.3 4.3 28.3 H12.7" fill="none" stroke="#2f3566" stroke-width="2.9"/><path d="M9.2 17.7 L14.2 20.8 L9.2 24Z" fill="#2f3566"/><rect x="21.2" y="13.8" width="11.5" height="2.5" fill="#2f3566"/><path d="M22 15 V27 M31.8 15 V27" stroke="#2f3566" stroke-width="2"/><circle cx="19.8" cy="26.8" r="2.9" fill="#2f3566"/><circle cx="29.8" cy="26.8" r="2.9" fill="#2f3566"/></svg>
<div class="t m" style="left:683.3px;top:1308.9px;font-size:24.71px;color:#2f3566;font-weight:400;letter-spacing:0.00px;transform:scaleX(1.0788);transform-origin:0 0;">We connect people, p...</div>
<div class="a" style="left:971.5px;top:1303.5px;width:71.3px;height:35px;border-radius:7px;background:#faf5f5"></div>
<div class="t m" style="left:977.5px;top:1308.9px;font-size:24.71px;color:#2f3566;font-weight:400;letter-spacing:0.00px;">7</div>
<svg style="left:1005.5px;top:1314px" width="18" height="12" viewBox="0 0 18 12"><path d="M2 2 L9 9 L16 2" fill="none" stroke="#2f3566" stroke-width="3"/></svg>
<div class="a" style="left:1081px;top:1266px;width:279.0px;height:110px;border-radius:9px;background:#2a4f36;"></div>
<div class="a" style="left:1080px;top:1292px;width:281.0px;height:58px;background:#d4dcd7;"></div>
<svg style="left:1099.4px;top:1306px" width="34" height="31" viewBox="0 0 34 31"><rect x="7.6" y="1" width="17.9" height="9" rx="1.6" fill="#2f3566"/><path d="M7.6 9 V15.2 H16.2 V11.9 H10.7 V9Z" fill="#2f3566"/><path d="M10.7 12.4 L13.8 4.6 L15.8 7.2 L18.1 5.7 L20.9 10.6 L10.7 10.6Z" fill="#d4dcd7"/><circle cx="21.2" cy="5.6" r="1.7" fill="#d4dcd7"/><path d="M3.9 13.2 Q2 14.3 2 16.6 V26 Q2 28.3 4.3 28.3 H12.7" fill="none" stroke="#2f3566" stroke-width="2.9"/><path d="M9.2 17.7 L14.2 20.8 L9.2 24Z" fill="#2f3566"/><rect x="21.2" y="13.8" width="11.5" height="2.5" fill="#2f3566"/><path d="M22 15 V27 M31.8 15 V27" stroke="#2f3566" stroke-width="2"/><circle cx="19.8" cy="26.8" r="2.9" fill="#2f3566"/><circle cx="29.8" cy="26.8" r="2.9" fill="#2f3566"/></svg>
<div class="t m" style="left:1149.6px;top:1308.9px;font-size:24.71px;color:#2f3566;font-weight:400;letter-spacing:0.00px;transform:scaleX(1.0480);transform-origin:0 0;">Every ...</div>
<div class="a" style="left:1258.8px;top:1303.5px;width:71.2px;height:35px;border-radius:7px;background:#faf6f6"></div>
<div class="t m" style="left:1264.8px;top:1308.9px;font-size:24.71px;color:#2f3566;font-weight:400;letter-spacing:0.00px;">7</div>
<svg style="left:1292.8px;top:1314px" width="18" height="12" viewBox="0 0 18 12"><path d="M2 2 L9 9 L16 2" fill="none" stroke="#2f3566" stroke-width="3"/></svg>
<div class="a" style="left:1369px;top:1266px;width:278.0px;height:110px;border-radius:9px;background:#a8f66f;"></div>
<div class="a" style="left:1368px;top:1292px;width:280.0px;height:58px;background:#effbe6;"></div>
<svg style="left:1386.7px;top:1306px" width="34" height="31" viewBox="0 0 34 31"><rect x="7.6" y="1" width="17.9" height="9" rx="1.6" fill="#2f3566"/><path d="M7.6 9 V15.2 H16.2 V11.9 H10.7 V9Z" fill="#2f3566"/><path d="M10.7 12.4 L13.8 4.6 L15.8 7.2 L18.1 5.7 L20.9 10.6 L10.7 10.6Z" fill="#effbe6"/><circle cx="21.2" cy="5.6" r="1.7" fill="#effbe6"/><path d="M3.9 13.2 Q2 14.3 2 16.6 V26 Q2 28.3 4.3 28.3 H12.7" fill="none" stroke="#2f3566" stroke-width="2.9"/><path d="M9.2 17.7 L14.2 20.8 L9.2 24Z" fill="#2f3566"/><rect x="21.2" y="13.8" width="11.5" height="2.5" fill="#2f3566"/><path d="M22 15 V27 M31.8 15 V27" stroke="#2f3566" stroke-width="2"/><circle cx="19.8" cy="26.8" r="2.9" fill="#2f3566"/><circle cx="29.8" cy="26.8" r="2.9" fill="#2f3566"/></svg>
<div class="t m" style="left:1437.9px;top:1308.9px;font-size:24.71px;color:#2f3566;font-weight:400;letter-spacing:0.00px;transform:scaleX(1.0993);transform-origin:0 0;">Strong...</div>
<div class="a" style="left:1547.0px;top:1303.5px;width:71.4px;height:35px;border-radius:7px;background:#f9fbf5"></div>
<div class="t m" style="left:1554.0px;top:1308.9px;font-size:24.71px;color:#2f3566;font-weight:400;letter-spacing:0.00px;">4</div>
<svg style="left:1581.0px;top:1314px" width="18" height="12" viewBox="0 0 18 12"><path d="M2 2 L9 9 L16 2" fill="none" stroke="#2f3566" stroke-width="3"/></svg>
<div class="a" style="left:1657px;top:1266px;width:279.0px;height:110px;border-radius:9px;background:linear-gradient(90deg,#1b2a1e 0%,#0c140d 22%,#2a4230 35%,#1f3424 50%,#33503a 62%,#1d3022 80%,#101a11 100%);"></div>
<div class="a" style="left:1656px;top:1292px;width:281.0px;height:58px;background:rgba(222,226,223,.86);"></div>
<svg style="left:1674.5px;top:1306px" width="34" height="31" viewBox="0 0 34 31"><rect x="7.6" y="1" width="17.9" height="9" rx="1.6" fill="#2f3566"/><path d="M7.6 9 V15.2 H16.2 V11.9 H10.7 V9Z" fill="#2f3566"/><path d="M10.7 12.4 L13.8 4.6 L15.8 7.2 L18.1 5.7 L20.9 10.6 L10.7 10.6Z" fill="#9aa59e"/><circle cx="21.2" cy="5.6" r="1.7" fill="#9aa59e"/><path d="M3.9 13.2 Q2 14.3 2 16.6 V26 Q2 28.3 4.3 28.3 H12.7" fill="none" stroke="#2f3566" stroke-width="2.9"/><path d="M9.2 17.7 L14.2 20.8 L9.2 24Z" fill="#2f3566"/><rect x="21.2" y="13.8" width="11.5" height="2.5" fill="#2f3566"/><path d="M22 15 V27 M31.8 15 V27" stroke="#2f3566" stroke-width="2"/><circle cx="19.8" cy="26.8" r="2.9" fill="#2f3566"/><circle cx="29.8" cy="26.8" r="2.9" fill="#2f3566"/></svg>
<div class="t m" style="left:1726.8px;top:1308.9px;font-size:24.71px;color:#2f3566;font-weight:400;letter-spacing:0.00px;transform:scaleX(1.0685);transform-origin:0 0;">We wo...</div>
<div class="a" style="left:1835.0px;top:1303.5px;width:71.7px;height:35px;border-radius:7px;background:#faf6f6"></div>
<div class="t m" style="left:1842.0px;top:1308.9px;font-size:24.71px;color:#2f3566;font-weight:400;letter-spacing:0.00px;">4</div>
<svg style="left:1869.0px;top:1314px" width="18" height="12" viewBox="0 0 18 12"><path d="M2 2 L9 9 L16 2" fill="none" stroke="#2f3566" stroke-width="3"/></svg>
<div class="a" style="left:1945px;top:1266px;width:387.0px;height:110px;border-radius:9px;background:#fff;box-shadow:0 2px 5px rgba(120,100,90,.10);"></div>
<div class="a" style="left:1944px;top:1292px;width:389.0px;height:58px;background:#fff;box-shadow:0 3px 10px rgba(110,90,80,.10);"></div>
<svg style="left:1962.7px;top:1306px" width="34" height="31" viewBox="0 0 34 31"><rect x="7.6" y="1" width="17.9" height="9" rx="1.6" fill="#2f3566"/><path d="M7.6 9 V15.2 H16.2 V11.9 H10.7 V9Z" fill="#2f3566"/><path d="M10.7 12.4 L13.8 4.6 L15.8 7.2 L18.1 5.7 L20.9 10.6 L10.7 10.6Z" fill="#fff"/><circle cx="21.2" cy="5.6" r="1.7" fill="#fff"/><path d="M3.9 13.2 Q2 14.3 2 16.6 V26 Q2 28.3 4.3 28.3 H12.7" fill="none" stroke="#2f3566" stroke-width="2.9"/><path d="M9.2 17.7 L14.2 20.8 L9.2 24Z" fill="#2f3566"/><rect x="21.2" y="13.8" width="11.5" height="2.5" fill="#2f3566"/><path d="M22 15 V27 M31.8 15 V27" stroke="#2f3566" stroke-width="2"/><circle cx="19.8" cy="26.8" r="2.9" fill="#2f3566"/><circle cx="29.8" cy="26.8" r="2.9" fill="#2f3566"/></svg>
<div class="t m" style="left:2015.0px;top:1308.9px;font-size:24.71px;color:#2f3566;font-weight:400;letter-spacing:0.00px;transform:scaleX(1.0455);transform-origin:0 0;">We see the risks...</div>
<div class="a" style="left:2231.0px;top:1303.5px;width:71.7px;height:35px;border-radius:7px;background:#faf5f5"></div>
<div class="t m" style="left:2237.0px;top:1308.9px;font-size:24.71px;color:#2f3566;font-weight:400;letter-spacing:0.00px;">7</div>
<svg style="left:2265.0px;top:1314px" width="18" height="12" viewBox="0 0 18 12"><path d="M2 2 L9 9 L16 2" fill="none" stroke="#2f3566" stroke-width="3"/></svg>
<div class="a" style="left:2341px;top:1266px;width:279.0px;height:110px;border-radius:9px;background:#2a4f36;"></div>
<div class="a" style="left:2340px;top:1292px;width:281.0px;height:58px;background:#d4dcd7;"></div>
<svg style="left:2358.7px;top:1306px" width="34" height="31" viewBox="0 0 34 31"><rect x="7.6" y="1" width="17.9" height="9" rx="1.6" fill="#2f3566"/><path d="M7.6 9 V15.2 H16.2 V11.9 H10.7 V9Z" fill="#2f3566"/><path d="M10.7 12.4 L13.8 4.6 L15.8 7.2 L18.1 5.7 L20.9 10.6 L10.7 10.6Z" fill="#d4dcd7"/><circle cx="21.2" cy="5.6" r="1.7" fill="#d4dcd7"/><path d="M3.9 13.2 Q2 14.3 2 16.6 V26 Q2 28.3 4.3 28.3 H12.7" fill="none" stroke="#2f3566" stroke-width="2.9"/><path d="M9.2 17.7 L14.2 20.8 L9.2 24Z" fill="#2f3566"/><rect x="21.2" y="13.8" width="11.5" height="2.5" fill="#2f3566"/><path d="M22 15 V27 M31.8 15 V27" stroke="#2f3566" stroke-width="2"/><circle cx="19.8" cy="26.8" r="2.9" fill="#2f3566"/><circle cx="29.8" cy="26.8" r="2.9" fill="#2f3566"/></svg>
<div class="t m" style="left:2411.0px;top:1308.9px;font-size:24.71px;color:#2f3566;font-weight:400;letter-spacing:0.00px;transform:scaleX(1.0594);transform-origin:0 0;">We do...</div>
<div class="a" style="left:2518.8px;top:1303.5px;width:71.8px;height:35px;border-radius:7px;background:#faf6f6"></div>
<div class="t m" style="left:2525.8px;top:1308.9px;font-size:24.71px;color:#2f3566;font-weight:400;letter-spacing:0.00px;">4</div>
<svg style="left:2552.8px;top:1314px" width="18" height="12" viewBox="0 0 18 12"><path d="M2 2 L9 9 L16 2" fill="none" stroke="#2f3566" stroke-width="3"/></svg>
<div class="a" style="left:2629px;top:1266px;width:271.0px;height:110px;border-radius:9px;background:#2a4f36;"></div>
<div class="a" style="left:2628px;top:1292px;width:273.0px;height:58px;background:#d4dcd7;"></div>
<svg style="left:2646.7px;top:1306px" width="34" height="31" viewBox="0 0 34 31"><rect x="7.6" y="1" width="17.9" height="9" rx="1.6" fill="#2f3566"/><path d="M7.6 9 V15.2 H16.2 V11.9 H10.7 V9Z" fill="#2f3566"/><path d="M10.7 12.4 L13.8 4.6 L15.8 7.2 L18.1 5.7 L20.9 10.6 L10.7 10.6Z" fill="#d4dcd7"/><circle cx="21.2" cy="5.6" r="1.7" fill="#d4dcd7"/><path d="M3.9 13.2 Q2 14.3 2 16.6 V26 Q2 28.3 4.3 28.3 H12.7" fill="none" stroke="#2f3566" stroke-width="2.9"/><path d="M9.2 17.7 L14.2 20.8 L9.2 24Z" fill="#2f3566"/><rect x="21.2" y="13.8" width="11.5" height="2.5" fill="#2f3566"/><path d="M22 15 V27 M31.8 15 V27" stroke="#2f3566" stroke-width="2"/><circle cx="19.8" cy="26.8" r="2.9" fill="#2f3566"/><circle cx="29.8" cy="26.8" r="2.9" fill="#2f3566"/></svg>
<div class="t m" style="left:2698.0px;top:1308.9px;font-size:24.71px;color:#2f3566;font-weight:400;letter-spacing:0.00px;">Smart. Clear.</div>
<div class="a" style="left:2900.0px;top:1303.5px;width:70.0px;height:35px;border-radius:7px;background:#faf6f6"></div>
<div class="t m" style="left:2906.0px;top:1308.9px;font-size:24.71px;color:#2f3566;font-weight:400;letter-spacing:0.00px;">7</div>
<svg style="left:2934.0px;top:1314px" width="18" height="12" viewBox="0 0 18 12"><path d="M2 2 L9 9 L16 2" fill="none" stroke="#2f3566" stroke-width="3"/></svg>
<div class="a" style="left:2776px;top:1221px;width:18px;height:309px;background:linear-gradient(90deg,rgba(243,239,240,0),rgba(243,239,240,.35))"></div>
<div class="a" style="left:2794px;top:1220px;width:216px;height:310px;background:#fff;border-top:1px solid #e6e2e3"></div>
<div class="a" style="left:3010px;top:1220px;width:14px;height:310px;background:#fff"></div>
<div class="a" style="left:317px;top:1392.5px;width:2477px;height:36.5px;background:#ece7e7"></div>
<div class="a" style="left:318.5px;top:1447.5px;width:2476px;height:38.5px;background:#cfd0de;border-top:2px solid #6a6f98;border-bottom:2px solid #6a6f98;border-left:2px solid #6a6f98;border-radius:6px 0 0 6px"></div>
<div class="a" style="left:700px;top:1462px;width:2094px;height:10px;background:repeating-linear-gradient(90deg,rgba(255,255,255,.55) 0 1px,transparent 1px 3px)"></div>
<svg style="left:346px;top:1457px" width="20" height="20" viewBox="0 0 20 20"><path d="M1 7 H5 L10 2.5 V17.5 L5 13 H1Z" fill="#2f3566"/><path d="M13 6.5 Q15.5 10 13 13.5 M15.5 4 Q19.5 10 15.5 16" fill="none" stroke="#2f3566" stroke-width="2"/></svg>
<div class="t m" style="left:384.4px;top:1457.7px;font-size:18.90px;color:#2f3566;font-weight:400;letter-spacing:0.00px;transform:scaleX(1.0098);transform-origin:0 0;">Corporate - It's All Uphill From Here</div>
<div class="a" style="left:320px;top:1221px;width:4px;height:286px;background:#5fcfd5"></div>
<svg style="left:310px;top:1215px" width="30" height="30" viewBox="310 1215 30 30"><path d="M317 1220 H332 L324 1236 H320 L317 1231 Z" fill="#5fcfd5"/></svg>
<svg style="left:180px;top:1297px" width="39" height="37" viewBox="0 0 39 37"><rect x="0" y="0.5" width="10" height="36" rx="2" fill="#676c91"/><path d="M38.5 1.5 V35.5 Q38.5 37 37 36 L12 19.5 Q10.5 18.5 12 17.5 L37 1 Q38.5 0 38.5 1.5Z" fill="#676c91"/></svg>
<svg style="left:245px;top:1287px" width="42" height="53" viewBox="0 0 42 53"><path d="M0.5 3 Q0.5 0 3.5 1.5 L40 24 Q42 26.5 40 29 L3.5 51.5 Q0.5 53 0.5 50Z" fill="#34396a"/></svg>
<svg style="left:218.5px;top:1383px" width="24" height="34" viewBox="0 0 24 34"><rect x="5.5" y="0" width="13" height="22" rx="6.5" fill="#676c91"/><path d="M2 14 Q2 25.5 12 25.5 Q22 25.5 22 14" fill="none" stroke="#676c91" stroke-width="3.2"/><path d="M12 25.5 V32 M5 32.5 H19" stroke="#676c91" stroke-width="3.2"/></svg>
<svg style="left:216px;top:1450px" width="30" height="31" viewBox="0 0 30 31"><path d="M8 25 V3 H27 V23" fill="none" stroke="#676c91" stroke-width="4.4" stroke-linejoin="round"/><circle cx="5.5" cy="25.5" r="5.3" fill="#676c91"/><circle cx="24.5" cy="24" r="5.3" fill="#676c91"/></svg>
<div class="a" style="left:2808px;top:1243.5px;width:140px;height:7.5px;border-radius:4px;background:#e4e3ea"></div>
<div class="a" style="left:2808px;top:1243.5px;width:54px;height:7.5px;border-radius:4px;background:#8f8cf4"></div>
<div class="a" style="left:2851px;top:1236px;width:22px;height:22px;border-radius:50%;background:#8f8cf4"></div>
<div class="t m" style="left:2967.0px;top:1236.2px;font-size:19.62px;color:#5d6285;font-weight:400;letter-spacing:0.00px;transform:scaleX(0.9533);transform-origin:0 0;">80%</div>
<div class="a" style="left:2866px;top:1316px;width:86px;height:86px;border-radius:50%;background:#5d5bf3;box-shadow:0 0 10px 3px rgba(93,91,243,.18)"></div>
<svg style="left:2887px;top:1337px" width="44" height="44" viewBox="0 0 44 44"><path d="M22 2 V42 M2 22 H42" stroke="#fff" stroke-width="3"/></svg>
<div class="t sb" style="left:2857.0px;top:1417.0px;font-size:20.64px;color:#0e1045;font-weight:400;letter-spacing:0.00px;transform:scaleX(1.0619);transform-origin:0 0;">Add scene</div>
</body></html>
